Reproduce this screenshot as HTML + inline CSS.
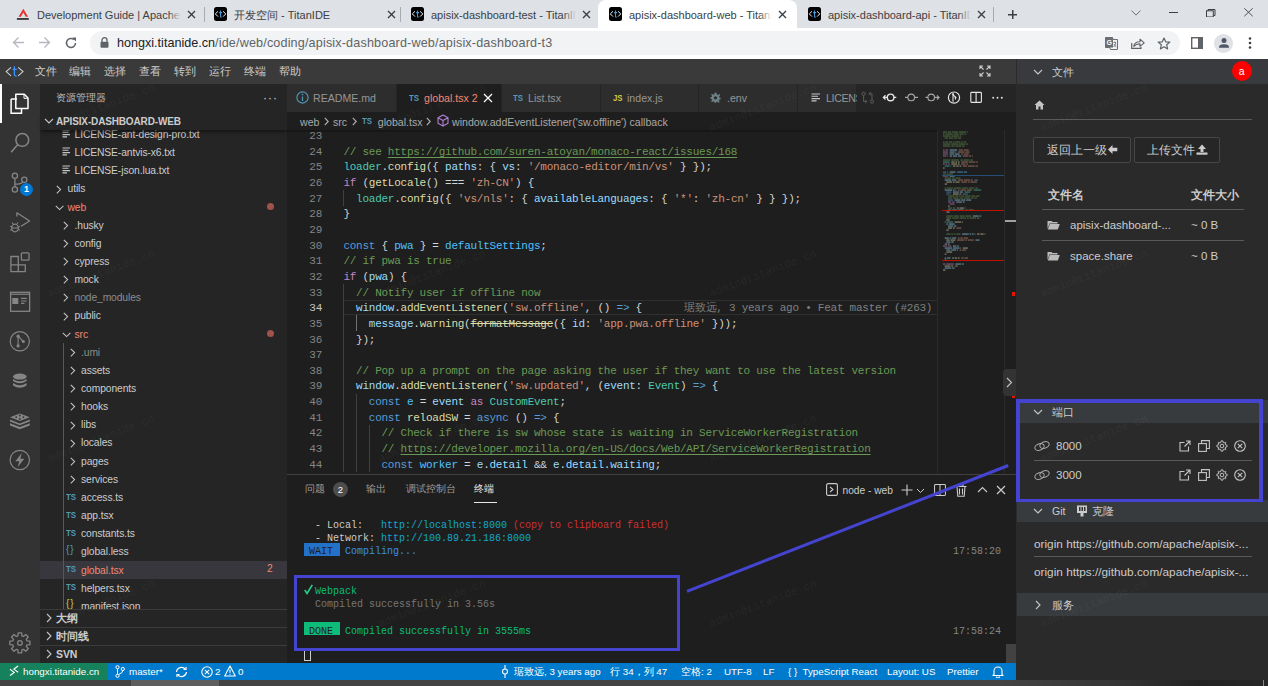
<!DOCTYPE html><html><head><meta charset="utf-8"><style>
*{box-sizing:border-box;margin:0;padding:0}
html,body{width:1268px;height:686px;overflow:hidden;background:#1e1e1e;font-family:"Liberation Sans",sans-serif}
div,span{white-space:nowrap}
.code div,.code span,.tt,.tt span{white-space:pre}
.a{position:absolute}
.tab{position:absolute;top:0;height:28px;font-size:11px;color:#3c4043}
.tab .t{position:absolute;top:8px;overflow:hidden;height:14px;line-height:14px}
.tab .fade{position:absolute;top:6px;width:22px;height:18px;background:linear-gradient(90deg,rgba(222,225,230,0),#dee1e6)}
.tab .x{position:absolute;top:7px}
.sep{position:absolute;top:7px;width:1px;height:15px;background:#a8abb0}
.ticon{position:absolute;top:7px;width:14px;height:14px;background:#000;border-radius:2px}
.menu{position:absolute;top:64px;font-size:11px;color:#cccccc;line-height:14px}
.side{font-size:10.3px;color:#cccccc;line-height:14px;letter-spacing:-0.1px}
.row{position:absolute;left:40px;width:247px;height:18px}
.row .n{position:absolute;top:2px}
.chev{position:absolute;top:5px;width:6px;height:6px;border-right:1.2px solid #c5c5c5;border-bottom:1.2px solid #c5c5c5}
.code{white-space:pre;font-family:"Liberation Mono",monospace;font-size:11px;letter-spacing:-0.25px;color:#d4d4d4}
.ln{position:absolute;left:290px;width:33px;text-align:right;color:#858585}
.cl{position:absolute;left:344px}
.cm{color:#6a9955}.kw{color:#569cd6}.ct{color:#c586c0}.v{color:#9cdcfe}.cv{color:#4fc1ff}.fn{color:#dcdcaa}.s{color:#ce9178}.ty{color:#4ec9b0}
.b1,.b2,.b3{color:#d4d4d4}
.u{text-decoration:underline;text-underline-offset:2px}
.term{font-family:"Liberation Mono",monospace;font-size:10px;color:#cccccc}
.sb{position:absolute;top:665px;font-size:9.8px;color:#fff;line-height:13px}
.rp{font-size:11.5px;color:#cccccc}
</style></head><body>
<div class="a" style="left:0;top:0;width:1268px;height:28px;background:#dee1e6"></div>
<div class="tab" style="left:0px;width:205px;">
<svg class="a" style="left:16px;top:8px" width="14" height="13" viewBox="16 8 14 13"><path d="M23.3 8.7 L28.1 16.8 L25.7 16.8 L23.3 12.5 L20.9 16.8 L18.5 16.8 Z" fill="#e8322f"/><rect x="16.9" y="18.1" width="11.9" height="1.7" fill="#2a2a2a"/></svg>
<div class="t" style="left:37px;width:144px">Development Guide | Apache APISIX</div>
<div class="fade" style="left:168px;width:13px;background:linear-gradient(90deg,rgba(255,255,255,0),#dee1e6)"></div>
<svg class="a" style="left:187px;top:10px" width="9" height="9" viewBox="0 0 9 9"><path d="M1 1 L8 8 M8 1 L1 8" stroke="#3c4043" stroke-width="1.4"/></svg>
</div>
<div class="sep" style="left:204px"></div>
<div class="tab" style="left:205px;width:195px;">
<div class="ticon" style="left:9px;width:13px;height:13.5px;top:7px;border-radius:2.5px"><svg width="13" height="13.5" viewBox="0 0 13 13.5"><path d="M4 4.3 L1.3 6.9 L4 9.6 M9.1 4.3 L11.8 6.9 L9.1 9.6" stroke="#f0f0f0" stroke-width="1" fill="none"/><path d="M6.5 3.6 V9.3 Q6.5 10.2 7.7 10.1 M5.1 5.6 H8.1" stroke="#3f9ee0" stroke-width="1.05" fill="none"/></svg></div>
<div class="t" style="left:29px;width:147px">开发空间 - TitanIDE</div>
<div class="fade" style="left:163px;width:13px;background:linear-gradient(90deg,rgba(255,255,255,0),#dee1e6)"></div>
<svg class="a" style="left:182px;top:10px" width="9" height="9" viewBox="0 0 9 9"><path d="M1 1 L8 8 M8 1 L1 8" stroke="#3c4043" stroke-width="1.4"/></svg>
</div>
<div class="sep" style="left:400px"></div>
<div class="tab" style="left:400px;width:198px;">
<div class="ticon" style="left:11px;width:13px;height:13.5px;top:7px;border-radius:2.5px"><svg width="13" height="13.5" viewBox="0 0 13 13.5"><path d="M4 4.3 L1.3 6.9 L4 9.6 M9.1 4.3 L11.8 6.9 L9.1 9.6" stroke="#f0f0f0" stroke-width="1" fill="none"/><path d="M6.5 3.6 V9.3 Q6.5 10.2 7.7 10.1 M5.1 5.6 H8.1" stroke="#3f9ee0" stroke-width="1.05" fill="none"/></svg></div>
<div class="t" style="left:31px;width:145px">apisix-dashboard-test - TitanIDE</div>
<div class="fade" style="left:163px;width:13px;background:linear-gradient(90deg,rgba(255,255,255,0),#dee1e6)"></div>
<svg class="a" style="left:182px;top:10px" width="9" height="9" viewBox="0 0 9 9"><path d="M1 1 L8 8 M8 1 L1 8" stroke="#3c4043" stroke-width="1.4"/></svg>
</div>
<div class="tab" style="left:598px;width:199px;background:#fff;border-radius:8px 8px 0 0;">
<div class="ticon" style="left:11px;width:13px;height:13.5px;top:7px;border-radius:2.5px"><svg width="13" height="13.5" viewBox="0 0 13 13.5"><path d="M4 4.3 L1.3 6.9 L4 9.6 M9.1 4.3 L11.8 6.9 L9.1 9.6" stroke="#f0f0f0" stroke-width="1" fill="none"/><path d="M6.5 3.6 V9.3 Q6.5 10.2 7.7 10.1 M5.1 5.6 H8.1" stroke="#3f9ee0" stroke-width="1.05" fill="none"/></svg></div>
<div class="t" style="left:31px;width:143px">apisix-dashboard-web - TitanIDE</div>
<div class="fade" style="left:161px;width:13px;background:linear-gradient(90deg,rgba(255,255,255,0),#fff)"></div>
<svg class="a" style="left:180px;top:10px" width="9" height="9" viewBox="0 0 9 9"><path d="M1 1 L8 8 M8 1 L1 8" stroke="#3c4043" stroke-width="1.4"/></svg>
</div>
<div class="tab" style="left:797px;width:198px;">
<div class="ticon" style="left:11px;width:13px;height:13.5px;top:7px;border-radius:2.5px"><svg width="13" height="13.5" viewBox="0 0 13 13.5"><path d="M4 4.3 L1.3 6.9 L4 9.6 M9.1 4.3 L11.8 6.9 L9.1 9.6" stroke="#f0f0f0" stroke-width="1" fill="none"/><path d="M6.5 3.6 V9.3 Q6.5 10.2 7.7 10.1 M5.1 5.6 H8.1" stroke="#3f9ee0" stroke-width="1.05" fill="none"/></svg></div>
<div class="t" style="left:31px;width:143px">apisix-dashboard-api - TitanIDE</div>
<div class="fade" style="left:161px;width:13px;background:linear-gradient(90deg,rgba(255,255,255,0),#dee1e6)"></div>
<svg class="a" style="left:180px;top:10px" width="9" height="9" viewBox="0 0 9 9"><path d="M1 1 L8 8 M8 1 L1 8" stroke="#3c4043" stroke-width="1.4"/></svg>
</div>
<div class="sep" style="left:993px;top:7px;height:15px"></div>
<svg class="a" style="left:1007.5px;top:9.5px" width="9.5" height="9.5" viewBox="0 0 9.5 9.5"><path d="M4.75 0 V9.5 M0 4.75 H9.5" stroke="#3c4043" stroke-width="1.5"/></svg>
<svg class="a" style="left:1131px;top:10px" width="10" height="6" viewBox="0 0 10 6"><path d="M0.5 0.6 L5 5.1 L9.5 0.6" stroke="#5f6368" stroke-width="0.9" fill="none"/></svg>
<div class="a" style="left:1168.7px;top:12px;width:9px;height:1px;background:#3c4043"></div>
<svg class="a" style="left:1206px;top:8.5px" width="9.5" height="8.5" viewBox="0 0 9.5 8.5"><rect x="0.5" y="1.8" width="6.8" height="6.2" stroke="#3c4043" stroke-width="1" fill="none"/><path d="M2 1.8 V0.5 H9 V6.5 H7.3" stroke="#3c4043" stroke-width="1" fill="none"/></svg>
<svg class="a" style="left:1244.4px;top:8.3px" width="9" height="8.5" viewBox="0 0 9 8.5"><path d="M0.3 0.3 L8.7 8.2 M8.7 0.3 L0.3 8.2" stroke="#3c4043" stroke-width="0.9"/></svg>
<div class="a" style="left:0;top:28px;width:1268px;height:31px;background:#fff"></div>
<svg class="a" style="left:12px;top:36px" width="13" height="13" viewBox="0 0 13 13"><path d="M12 6.5 H1.5 M6.5 1.5 L1.5 6.5 L6.5 11.5" stroke="#b4b7bb" stroke-width="1.3" fill="none"/></svg>
<svg class="a" style="left:38px;top:36px" width="13" height="13" viewBox="0 0 13 13"><path d="M1 6.5 H11.5 M6.5 1.5 L11.5 6.5 L6.5 11.5" stroke="#b4b7bb" stroke-width="1.3" fill="none"/></svg>
<svg class="a" style="left:64px;top:36px" width="14" height="14" viewBox="0 0 14 14"><path d="M11.5 7 A4.5 4.5 0 1 1 10.2 3.8" stroke="#5f6368" stroke-width="1.5" fill="none"/><path d="M8.2 1.6 H12 V5.4 Z" fill="#5f6368"/></svg>
<div class="a" style="left:90px;top:31px;width:1090px;height:24px;border-radius:12px;background:#f1f3f4"></div>
<svg class="a" style="left:100px;top:37px" width="9" height="11" viewBox="0 0 9 11"><path d="M2 5 V3.2 A2.5 2.5 0 0 1 7 3.2 V5" stroke="#5f6368" stroke-width="1.3" fill="none"/><rect x="0.5" y="4.8" width="8" height="6" rx="1" fill="#5f6368"/></svg>
<div class="a" style="left:117px;top:36px;font-size:12.6px;line-height:15px;color:#202124">hongxi.titanide.cn<span style="color:#5f6368;letter-spacing:0.16px">/ide/web/coding/apisix-dashboard-web/apisix-dashboard-t3</span></div>
<svg class="a" style="left:1105px;top:37px" width="13" height="13" viewBox="0 0 13 13"><path d="M0.5 0.5 H7.5 L8.2 2.5 H12.5 V12.5 H5.5 L4.8 10.5 H0.5 Z" fill="#f1f3f4" stroke="#6b6e72" stroke-width="1"/><rect x="0.5" y="0.5" width="7.5" height="10" fill="#6b6e72"/><text x="1.6" y="8.2" font-size="7" font-weight="bold" fill="#fff" font-family="Liberation Sans">G</text><path d="M8.5 5.5 H11 M9.8 4.5 V5.5 M9 7 Q10 9.5 11.5 10 M10.8 5.8 Q10.5 8.5 8.6 10" stroke="#6b6e72" stroke-width="0.8" fill="none"/></svg>
<svg class="a" style="left:1131px;top:38px" width="14" height="11" viewBox="0 0 14 11"><path d="M0.7 5 V10.3 H10 V9" stroke="#5f6368" stroke-width="1.2" fill="none"/><path d="M2.8 8.3 Q3.5 3.8 9 3.8 V1.2 L13.2 4.8 L9 8.4 V5.9 Q5 5.9 2.8 8.3 Z" stroke="#5f6368" stroke-width="1.1" fill="none" stroke-linejoin="round"/></svg>
<svg class="a" style="left:1157px;top:37px" width="14" height="13" viewBox="0 0 14 13"><path d="M7 1 L8.7 4.8 L12.8 5.1 L9.7 7.8 L10.6 11.9 L7 9.8 L3.4 11.9 L4.3 7.8 L1.2 5.1 L5.3 4.8 Z" stroke="#5f6368" stroke-width="1.2" fill="none" stroke-linejoin="round"/></svg>
<svg class="a" style="left:1191px;top:37px" width="12" height="12" viewBox="0 0 12 12"><rect x="0.7" y="0.7" width="10.6" height="10.6" stroke="#5f6368" stroke-width="1.4" fill="none"/><rect x="7" y="0.7" width="4.3" height="10.6" fill="#5f6368"/></svg>
<div class="a" style="left:1214.4px;top:33.5px;width:19px;height:19px;border-radius:10px;background:#dfe1e5"></div>
<svg class="a" style="left:1217px;top:36px" width="14" height="14" viewBox="0 0 14 14"><circle cx="7" cy="4.6" r="2.5" fill="#4d5766"/><path d="M2 11.2 Q2 8.3 7 8.3 Q12 8.3 12 11.2 V11.8 H2 Z" fill="#4d5766"/></svg>
<svg class="a" style="left:1248px;top:36px" width="4" height="14" viewBox="0 0 4 14"><circle cx="2" cy="2.5" r="1.3" fill="#3c4043"/><circle cx="2" cy="7" r="1.3" fill="#3c4043"/><circle cx="2" cy="11.5" r="1.3" fill="#3c4043"/></svg>
<div class="a" style="left:0;top:59px;width:1268px;height:25px;background:#3a3a3a"></div>
<svg class="a" style="left:0;top:59px" width="30" height="25" viewBox="0 59 30 25"><path d="M11 67.3 L6.2 71.6 L11 75.9 M18.2 67.3 L23 71.6 L18.2 75.9" stroke="#d0d0d0" stroke-width="1.1" fill="none"/><path d="M14.4 66.3 V74.4 Q14.4 76.2 16.6 76 M12.6 69.4 H16.8" stroke="#3794ff" stroke-width="1.3" fill="none"/></svg>
<div class="menu" style="left:35px">文件</div>
<div class="menu" style="left:69px">编辑</div>
<div class="menu" style="left:104px">选择</div>
<div class="menu" style="left:139px">查看</div>
<div class="menu" style="left:174px">转到</div>
<div class="menu" style="left:209px">运行</div>
<div class="menu" style="left:244px">终端</div>
<div class="menu" style="left:279px">帮助</div>
<svg class="a" style="left:979px;top:65px" width="12" height="12" viewBox="0 0 12 12"><path d="M1 4 V1 H4 M8 1 H11 V4 M11 8 V11 H8 M4 11 H1 V8 M1 1 L4.5 4.5 M11 1 L7.5 4.5 M11 11 L7.5 7.5 M1 11 L4.5 7.5" stroke="#cccccc" stroke-width="1.1" fill="none"/></svg>
<div class="a" style="left:0;top:84px;width:40px;height:579px;background:#333333"></div>
<div class="a" style="left:0;top:84px;width:2px;height:39px;background:#ffffff"></div>
<svg class="a" style="left:0;top:84px" width="40" height="579" viewBox="0 84 40 579"><path d="M11.1 99 H17 M11.1 99 V113.2 H21.5 V108.8" stroke="#ffffff" stroke-width="1.5" fill="none"/><path d="M15.8 94.3 H24.3 L28 98 V108.5 H15.8 Z" stroke="#ffffff" stroke-width="1.5" fill="none" stroke-linejoin="round"/><path d="M24 94.5 V98.3 H27.8" stroke="#ffffff" stroke-width="1" fill="none"/><circle cx="22.3" cy="139.9" r="6.4" stroke="#858585" stroke-width="1.5" fill="none"/><path d="M17.6 144.8 L11.1 152.3" stroke="#858585" stroke-width="1.6"/><circle cx="14.9" cy="175.7" r="2.6" stroke="#858585" stroke-width="1.3" fill="none"/><circle cx="24.3" cy="179.8" r="2.6" stroke="#858585" stroke-width="1.3" fill="none"/><circle cx="14.9" cy="189.5" r="2.6" stroke="#858585" stroke-width="1.3" fill="none"/><path d="M14.9 178.3 V186.9 M23 182.2 Q21 184 15.5 184.2" stroke="#858585" stroke-width="1.3" fill="none"/><path d="M16.9 216.5 V212.8 L29.6 221 L21 226.3" stroke="#858585" stroke-width="1.3" fill="none" stroke-linejoin="round"/><ellipse cx="15" cy="228" rx="3.3" ry="3.8" stroke="#858585" stroke-width="1.3" fill="none"/><path d="M11.7 226.5 H10 M11.7 230 H10 M18.3 226.5 H20 M18.3 230 H20 M13 223.8 L12 222.5 M17 223.8 L18 222.5 M11.7 228 H18.3" stroke="#858585" stroke-width="1.1" fill="none"/><path d="M10.9 256.5 H18.3 V264.9 H25.3 V271.6 H10.9 Z M10.9 264.9 H18.3 V271.6" stroke="#858585" stroke-width="1.3" fill="none" stroke-linejoin="round"/><rect x="21.4" y="252.8" width="7.6" height="7.4" rx="1" stroke="#858585" stroke-width="1.3" fill="none"/><rect x="10.6" y="292.3" width="19" height="19" stroke="#858585" stroke-width="1.3" fill="none"/><path d="M10.6 294.2 H29.6" stroke="#858585" stroke-width="1.2"/><rect x="12.3" y="298" width="6" height="6" fill="#858585"/><path d="M21 298.4 H26.8 M21 301 H26.8 M21 303.4 H24.5" stroke="#858585" stroke-width="1.1"/><circle cx="19.8" cy="341.3" r="9.6" stroke="#858585" stroke-width="1.2" fill="none"/><path d="M18.1 336.2 V345.9 M18.1 336.2 L23.3 341.5" stroke="#858585" stroke-width="1.1"/><circle cx="18.1" cy="336.2" r="1.6" fill="#858585"/><circle cx="23.3" cy="341.5" r="1.6" fill="#858585"/><circle cx="18.1" cy="345.9" r="1.6" fill="#858585"/><ellipse cx="19.8" cy="376.6" rx="6.8" ry="3" fill="#858585"/><path d="M13 379 Q19.8 383.5 26.6 379 V381 Q19.8 385.5 13 381 Z M13 383 Q19.8 387.5 26.6 383 V385.5 Q19.8 390 13 385.5 Z" fill="#858585"/><path d="M19.8 413.5 L29.8 417.2 L19.8 421 L10 417.2 Z" fill="#858585"/><path d="M10 419.6 L19.8 423.4 L29.8 419.6 V421.5 L19.8 425.3 L10 421.5 Z M10 423.2 L19.8 427 L29.8 423.2 V425.5 L19.8 429.3 L10 425.5 Z" fill="#858585"/><circle cx="19.8" cy="415.5" r="0.9" fill="#333"/><circle cx="16.2" cy="417.2" r="0.9" fill="#333"/><circle cx="23.4" cy="417.2" r="0.9" fill="#333"/><circle cx="19.8" cy="419" r="0.9" fill="#333"/><circle cx="19.8" cy="460" r="9.7" stroke="#858585" stroke-width="1.2" fill="none"/><path d="M21.8 453 L15.3 461.2 H19.3 L17.6 467.3 L24.3 458.8 H20.3 Z" fill="#858585"/><path d="M26.91 640.86 L29.95 641.15 L29.95 644.65 L26.91 644.94 L26.30 646.42 L28.25 648.77 L25.77 651.25 L23.42 649.30 L21.94 649.91 L21.65 652.95 L18.15 652.95 L17.86 649.91 L16.38 649.30 L14.03 651.25 L11.55 648.77 L13.50 646.42 L12.89 644.94 L9.85 644.65 L9.85 641.15 L12.89 640.86 L13.50 639.38 L11.55 637.03 L14.03 634.55 L16.38 636.50 L17.86 635.89 L18.15 632.85 L21.65 632.85 L21.94 635.89 L23.42 636.50 L25.77 634.55 L28.25 637.03 L26.30 639.38 Z" stroke="#858585" stroke-width="1.3" fill="none" stroke-linejoin="round"/><circle cx="19.9" cy="642.9" r="2.3" stroke="#858585" stroke-width="1.3" fill="none"/></svg>
<div class="a" style="left:20.2px;top:183.3px;width:12.8px;height:12.8px;border-radius:7px;background:#0078d4;color:#fff;font-size:9px;line-height:13px;text-align:center;font-weight:bold">1</div>
<div class="a" style="left:40px;top:84px;width:247px;height:579px;background:#252526"></div>
<div class="a side" style="left:56px;top:91px;font-size:10px;color:#bbbbbb">资源管理器</div>
<div class="a" style="left:263px;top:91px;font-size:12px;color:#cccccc;letter-spacing:1px">···</div>
<div class="a" style="left:40px;top:130px;width:247px;height:479px;overflow:hidden">
<svg class="a" style="left:21.5px;top:-0.90px" width="9" height="9" viewBox="0 0 9 9"><path d="M0.5 1 H8 M0.5 3.3 H6.5 M0.5 5.6 H8 M0.5 7.9 H5" stroke="#c5c5c5" stroke-width="1.1"/></svg>
<div class="a side" style="left:34.5px;top:-2.10px;color:#cccccc">LICENSE-ant-design-pro.txt</div>
<svg class="a" style="left:21.5px;top:17.25px" width="9" height="9" viewBox="0 0 9 9"><path d="M0.5 1 H8 M0.5 3.3 H6.5 M0.5 5.6 H8 M0.5 7.9 H5" stroke="#c5c5c5" stroke-width="1.1"/></svg>
<div class="a side" style="left:34.5px;top:16.05px;color:#cccccc">LICENSE-antvis-x6.txt</div>
<svg class="a" style="left:21.5px;top:35.40px" width="9" height="9" viewBox="0 0 9 9"><path d="M0.5 1 H8 M0.5 3.3 H6.5 M0.5 5.6 H8 M0.5 7.9 H5" stroke="#c5c5c5" stroke-width="1.1"/></svg>
<div class="a side" style="left:34.5px;top:34.20px;color:#cccccc">LICENSE-json.lua.txt</div>
<svg class="a" style="left:16.0px;top:54.55px" width="6" height="10" viewBox="0 0 6 10"><path d="M0.8 0.8 L4.6 4.6 L0.8 8.4" stroke="#c5c5c5" stroke-width="1.05" fill="none"/></svg>
<div class="a side" style="left:27.5px;top:52.35px;color:#cccccc">utils</div>
<svg class="a" style="left:15.0px;top:74.70px" width="10" height="6" viewBox="0 0 10 6"><path d="M0.8 0.8 L4.6 4.6 L8.4 0.8" stroke="#c5c5c5" stroke-width="1.05" fill="none"/></svg>
<div class="a side" style="left:27.5px;top:70.50px;color:#f48771">web</div>
<div class="a" style="left:227px;top:73.20px;width:7px;height:7px;border-radius:4px;background:#a1524a"></div>
<svg class="a" style="left:23.0px;top:90.85px" width="6" height="10" viewBox="0 0 6 10"><path d="M0.8 0.8 L4.6 4.6 L0.8 8.4" stroke="#c5c5c5" stroke-width="1.05" fill="none"/></svg>
<div class="a side" style="left:34.5px;top:88.65px;color:#cccccc">.husky</div>
<svg class="a" style="left:23.0px;top:109.00px" width="6" height="10" viewBox="0 0 6 10"><path d="M0.8 0.8 L4.6 4.6 L0.8 8.4" stroke="#c5c5c5" stroke-width="1.05" fill="none"/></svg>
<div class="a side" style="left:34.5px;top:106.80px;color:#cccccc">config</div>
<svg class="a" style="left:23.0px;top:127.15px" width="6" height="10" viewBox="0 0 6 10"><path d="M0.8 0.8 L4.6 4.6 L0.8 8.4" stroke="#c5c5c5" stroke-width="1.05" fill="none"/></svg>
<div class="a side" style="left:34.5px;top:124.95px;color:#cccccc">cypress</div>
<svg class="a" style="left:23.0px;top:145.30px" width="6" height="10" viewBox="0 0 6 10"><path d="M0.8 0.8 L4.6 4.6 L0.8 8.4" stroke="#c5c5c5" stroke-width="1.05" fill="none"/></svg>
<div class="a side" style="left:34.5px;top:143.10px;color:#cccccc">mock</div>
<svg class="a" style="left:23.0px;top:163.45px" width="6" height="10" viewBox="0 0 6 10"><path d="M0.8 0.8 L4.6 4.6 L0.8 8.4" stroke="#c5c5c5" stroke-width="1.05" fill="none"/></svg>
<div class="a side" style="left:34.5px;top:161.25px;color:#8c8c8c">node_modules</div>
<svg class="a" style="left:23.0px;top:181.60px" width="6" height="10" viewBox="0 0 6 10"><path d="M0.8 0.8 L4.6 4.6 L0.8 8.4" stroke="#c5c5c5" stroke-width="1.05" fill="none"/></svg>
<div class="a side" style="left:34.5px;top:179.40px;color:#cccccc">public</div>
<svg class="a" style="left:22.0px;top:201.75px" width="10" height="6" viewBox="0 0 10 6"><path d="M0.8 0.8 L4.6 4.6 L8.4 0.8" stroke="#c5c5c5" stroke-width="1.05" fill="none"/></svg>
<div class="a side" style="left:34.5px;top:197.55px;color:#f48771">src</div>
<div class="a" style="left:227px;top:200.25px;width:7px;height:7px;border-radius:4px;background:#a1524a"></div>
<svg class="a" style="left:29.5px;top:217.90px" width="6" height="10" viewBox="0 0 6 10"><path d="M0.8 0.8 L4.6 4.6 L0.8 8.4" stroke="#c5c5c5" stroke-width="1.05" fill="none"/></svg>
<div class="a side" style="left:41.0px;top:215.70px;color:#8c8c8c">.umi</div>
<svg class="a" style="left:29.5px;top:236.05px" width="6" height="10" viewBox="0 0 6 10"><path d="M0.8 0.8 L4.6 4.6 L0.8 8.4" stroke="#c5c5c5" stroke-width="1.05" fill="none"/></svg>
<div class="a side" style="left:41.0px;top:233.85px;color:#cccccc">assets</div>
<svg class="a" style="left:29.5px;top:254.20px" width="6" height="10" viewBox="0 0 6 10"><path d="M0.8 0.8 L4.6 4.6 L0.8 8.4" stroke="#c5c5c5" stroke-width="1.05" fill="none"/></svg>
<div class="a side" style="left:41.0px;top:252.00px;color:#cccccc">components</div>
<svg class="a" style="left:29.5px;top:272.35px" width="6" height="10" viewBox="0 0 6 10"><path d="M0.8 0.8 L4.6 4.6 L0.8 8.4" stroke="#c5c5c5" stroke-width="1.05" fill="none"/></svg>
<div class="a side" style="left:41.0px;top:270.15px;color:#cccccc">hooks</div>
<svg class="a" style="left:29.5px;top:290.50px" width="6" height="10" viewBox="0 0 6 10"><path d="M0.8 0.8 L4.6 4.6 L0.8 8.4" stroke="#c5c5c5" stroke-width="1.05" fill="none"/></svg>
<div class="a side" style="left:41.0px;top:288.30px;color:#cccccc">libs</div>
<svg class="a" style="left:29.5px;top:308.65px" width="6" height="10" viewBox="0 0 6 10"><path d="M0.8 0.8 L4.6 4.6 L0.8 8.4" stroke="#c5c5c5" stroke-width="1.05" fill="none"/></svg>
<div class="a side" style="left:41.0px;top:306.45px;color:#cccccc">locales</div>
<svg class="a" style="left:29.5px;top:326.80px" width="6" height="10" viewBox="0 0 6 10"><path d="M0.8 0.8 L4.6 4.6 L0.8 8.4" stroke="#c5c5c5" stroke-width="1.05" fill="none"/></svg>
<div class="a side" style="left:41.0px;top:324.60px;color:#cccccc">pages</div>
<svg class="a" style="left:29.5px;top:344.95px" width="6" height="10" viewBox="0 0 6 10"><path d="M0.8 0.8 L4.6 4.6 L0.8 8.4" stroke="#c5c5c5" stroke-width="1.05" fill="none"/></svg>
<div class="a side" style="left:41.0px;top:342.75px;color:#cccccc">services</div>
<div class="a" style="left:25.6px;top:361.50px;font-size:9.8px;font-weight:bold;color:#519aba;line-height:10px;transform:scaleX(0.8);transform-origin:0 0;letter-spacing:-0.2px">TS</div>
<div class="a side" style="left:41.0px;top:360.90px;color:#cccccc">access.ts</div>
<div class="a" style="left:25.6px;top:379.65px;font-size:9.8px;font-weight:bold;color:#519aba;line-height:10px;transform:scaleX(0.8);transform-origin:0 0;letter-spacing:-0.2px">TS</div>
<div class="a side" style="left:41.0px;top:379.05px;color:#cccccc">app.tsx</div>
<div class="a" style="left:25.6px;top:397.80px;font-size:9.8px;font-weight:bold;color:#519aba;line-height:10px;transform:scaleX(0.8);transform-origin:0 0;letter-spacing:-0.2px">TS</div>
<div class="a side" style="left:41.0px;top:397.20px;color:#cccccc">constants.ts</div>
<div class="a" style="left:26.0px;top:413.55px;font-size:10px;color:#519aba;line-height:12px;letter-spacing:1px">{}</div>
<div class="a side" style="left:41.0px;top:415.35px;color:#cccccc">global.less</div>
<div class="a" style="left:0;top:430.70px;width:247px;height:18.2px;background:#37373d"></div>
<div class="a" style="left:25.6px;top:434.10px;font-size:9.8px;font-weight:bold;color:#519aba;line-height:10px;transform:scaleX(0.8);transform-origin:0 0;letter-spacing:-0.2px">TS</div>
<div class="a side" style="left:41.0px;top:433.50px;color:#f48771">global.tsx</div>
<div class="a side" style="left:227px;top:432.20px;color:#f48771">2</div>
<div class="a" style="left:25.6px;top:452.25px;font-size:9.8px;font-weight:bold;color:#519aba;line-height:10px;transform:scaleX(0.8);transform-origin:0 0;letter-spacing:-0.2px">TS</div>
<div class="a side" style="left:41.0px;top:451.65px;color:#cccccc">helpers.tsx</div>
<div class="a" style="left:26.0px;top:468.00px;font-size:10px;color:#cbcb41;line-height:12px;letter-spacing:1px">{}</div>
<div class="a side" style="left:41.0px;top:469.80px;color:#cccccc">manifest.json</div>
<div class="a" style="left:22.8px;top:212.8px;width:1px;height:300px;background:#585858"></div>
</div>
<div class="a" style="left:40px;top:112px;width:247px;height:18px;background:#252526;box-shadow:0 3px 3px -1px rgba(0,0,0,0.45)"></div>
<svg class="a" style="left:44px;top:118px" width="10" height="6" viewBox="0 0 10 6"><path d="M1 1 L5 5 L9 1" stroke="#c5c5c5" stroke-width="1.1" fill="none"/></svg>
<div class="a side" style="left:56px;top:115px;font-weight:bold;font-size:10px;letter-spacing:-0.15px;color:#cccccc">APISIX-DASHBOARD-WEB</div>
<div class="a" style="left:40px;top:609px;width:247px;height:18px;border-top:1px solid #3c3c3c;background:#252526"></div>
<svg class="a" style="left:45.5px;top:613px" width="6" height="10" viewBox="0 0 6 10"><path d="M1 1 L5 5 L1 9" stroke="#c5c5c5" stroke-width="1.1" fill="none"/></svg>
<div class="a side" style="left:56px;top:611px;font-weight:bold;font-size:10.5px;color:#cccccc">大纲</div>
<div class="a" style="left:40px;top:627px;width:247px;height:18px;border-top:1px solid #3c3c3c;background:#252526"></div>
<svg class="a" style="left:45.5px;top:631px" width="6" height="10" viewBox="0 0 6 10"><path d="M1 1 L5 5 L1 9" stroke="#c5c5c5" stroke-width="1.1" fill="none"/></svg>
<div class="a side" style="left:56px;top:629px;font-weight:bold;font-size:10.5px;color:#cccccc">时间线</div>
<div class="a" style="left:40px;top:645px;width:247px;height:18px;border-top:1px solid #3c3c3c;background:#252526"></div>
<svg class="a" style="left:45.5px;top:649px" width="6" height="10" viewBox="0 0 6 10"><path d="M1 1 L5 5 L1 9" stroke="#c5c5c5" stroke-width="1.1" fill="none"/></svg>
<div class="a side" style="left:56px;top:647px;font-weight:bold;font-size:10.5px;color:#cccccc">SVN</div>
<div class="a" style="left:287px;top:84px;width:729px;height:28px;background:#252526"></div>
<div class="a" style="left:287px;top:84px;width:110px;height:28px;background:#2d2d2d;border-right:1px solid #252526"></div>
<div class="a" style="left:397px;top:84px;width:105px;height:28px;background:#1e1e1e;border-right:1px solid #252526"></div>
<div class="a" style="left:502px;top:84px;width:99px;height:28px;background:#2d2d2d;border-right:1px solid #252526"></div>
<div class="a" style="left:601px;top:84px;width:98px;height:28px;background:#2d2d2d;border-right:1px solid #252526"></div>
<div class="a" style="left:699px;top:84px;width:99px;height:28px;background:#2d2d2d;border-right:1px solid #252526"></div>
<div class="a" style="left:798px;top:84px;width:72px;height:28px;background:#2d2d2d;border-right:1px solid #252526"></div>
<div class="a" style="left:856px;top:84px;width:160px;height:28px;background:#252526"></div>
<svg class="a" style="left:296px;top:91px" width="13" height="13" viewBox="0 0 13 13"><circle cx="6.5" cy="6.5" r="5.6" stroke="#519aba" stroke-width="1.1" fill="none"/><path d="M6.5 5.5 V10" stroke="#519aba" stroke-width="1.2"/><circle cx="6.5" cy="3.6" r="0.8" fill="#519aba"/></svg>
<div class="a" style="left:313px;top:91px;font-size:10.6px;line-height:14px;color:#969696">README.md</div>
<div class="a" style="left:408.6px;top:92.60px;font-size:9.8px;font-weight:bold;color:#519aba;line-height:10px;transform:scaleX(0.8);transform-origin:0 0;letter-spacing:-0.2px">TS</div>
<div class="a" style="left:424px;top:91px;font-size:10.6px;line-height:14px;color:#969696;color:#f48771">global.tsx 2</div>
<svg class="a" style="left:483px;top:93px" width="10" height="10" viewBox="0 0 10 10"><path d="M1 1 L9 9 M9 1 L1 9" stroke="#ffffff" stroke-width="1.2"/></svg>
<div class="a" style="left:513.0px;top:92.60px;font-size:9.8px;font-weight:bold;color:#519aba;line-height:10px;transform:scaleX(0.8);transform-origin:0 0;letter-spacing:-0.2px">TS</div>
<div class="a" style="left:528px;top:91px;font-size:10.6px;line-height:14px;color:#969696">List.tsx</div>
<div class="a" style="left:612.5px;top:92.60px;font-size:9.8px;font-weight:bold;color:#cbcb41;line-height:10px;transform:scaleX(0.8);transform-origin:0 0;letter-spacing:-0.2px">JS</div>
<div class="a" style="left:627px;top:91px;font-size:10.6px;line-height:14px;color:#969696">index.js</div>
<svg class="a" style="left:710px;top:92px" width="11" height="11" viewBox="0 0 20 20"><path d="M10 1 L12 1.5 L12.5 4.5 L14.5 5.5 L17 3.7 L18.5 5.5 L16.5 8 L17 10 L19.5 10.8 V13 L17 13.5 L16 15.5 L17.5 18 L15.5 19.5 L13 17.5 L11 18.3 L10.5 19.8 H8.5 L8 17.8 L6 17 L3.5 18.8 L2 17 L3.8 14.6 L3 12.5 L0.5 12 V9.8 L3 9.3 L3.8 7.3 L2 4.8 L3.7 3.2 L6 5 L8 4.2 L8.5 1.5 Z" fill="#6d8086"/><circle cx="10" cy="10.5" r="3" fill="#2d2d2d"/></svg>
<div class="a" style="left:727px;top:91px;font-size:10.6px;line-height:14px;color:#969696">.env</div>
<svg class="a" style="left:811px;top:93px" width="10" height="9" viewBox="0 0 10 9"><path d="M0.5 1 H9 M0.5 3.3 H7 M0.5 5.6 H9 M0.5 7.9 H5.5" stroke="#c5c5c5" stroke-width="1.1"/></svg>
<div class="a" style="left:826px;top:91px;width:31px;overflow:hidden;font-size:10.6px;line-height:14px;color:#969696;letter-spacing:-0.35px">LICENSE</div>
<svg class="a" style="left:856px;top:84px" width="160" height="28" viewBox="856 84 160 28"><circle cx="863.6" cy="93.8" r="1.6" stroke="#5c5c5c" stroke-width="1" fill="none"/><circle cx="872" cy="101.6" r="1.6" stroke="#5c5c5c" stroke-width="1" fill="none"/><path d="M863.6 95.4 V101.5 H866.5 M865.3 99.8 L867 101.5 L865.3 103.2 M872 100 V93.8 H869 M870.7 92.1 L869 93.8 L870.7 95.5" stroke="#5c5c5c" stroke-width="1" fill="none"/><circle cx="890.6" cy="97.4" r="3.3" stroke="#e6e6e6" stroke-width="1.4" fill="none"/><path d="M887.3 97.4 H883.5 M885.5 95.3 L883.4 97.4 L885.5 99.5 M893.9 97.4 H896.3" stroke="#e6e6e6" stroke-width="1.3" fill="none"/><circle cx="911.2" cy="97.4" r="3.3" stroke="#a8a8a8" stroke-width="1.1" fill="none"/><path d="M907.9 97.4 H905 M914.5 97.4 H918" stroke="#a8a8a8" stroke-width="1.1" fill="none"/><circle cx="931.2" cy="97.4" r="3.3" stroke="#a8a8a8" stroke-width="1.1" fill="none"/><path d="M927.9 97.4 H925.5 M934.5 97.4 H939 M937 95.3 L939.1 97.4 L937 99.5" stroke="#a8a8a8" stroke-width="1.1" fill="none"/><circle cx="954" cy="97.6" r="5.6" stroke="#e6e6e6" stroke-width="1.2" fill="none"/><path d="M953 93.5 V101.8 M953 94.5 L955.5 97.2 V99.5" stroke="#e6e6e6" stroke-width="1.1" fill="none"/><circle cx="953" cy="94.2" r="0.9" fill="#e6e6e6"/><circle cx="955.5" cy="97.5" r="0.9" fill="#e6e6e6"/><rect x="970.8" y="92.4" width="10.6" height="10" rx="0.8" stroke="#e6e6e6" stroke-width="1.1" fill="none"/><path d="M976.1 92.4 V102.4" stroke="#e6e6e6" stroke-width="1.1"/><circle cx="993.2" cy="97.7" r="0.95" fill="#e6e6e6"/><circle cx="997.5" cy="97.7" r="0.95" fill="#e6e6e6"/><circle cx="1001.8" cy="97.7" r="0.95" fill="#e6e6e6"/></svg>
<div class="a" style="left:287px;top:112px;width:729px;height:18px;background:#1e1e1e"></div>
<div class="a" style="left:300px;top:114.7px;font-size:10.6px;line-height:14px;color:#a9a9a9">web</div>
<svg class="a" style="left:324px;top:116.5px" width="5" height="9" viewBox="0 0 5 9"><path d="M0.8 0.8 L4.2 4.5 L0.8 8.2" stroke="#b0b0b0" stroke-width="1.15" fill="none"/></svg>
<div class="a" style="left:333px;top:114.7px;font-size:10.6px;line-height:14px;color:#a9a9a9">src</div>
<svg class="a" style="left:352px;top:116.5px" width="5" height="9" viewBox="0 0 5 9"><path d="M0.8 0.8 L4.2 4.5 L0.8 8.2" stroke="#b0b0b0" stroke-width="1.15" fill="none"/></svg>
<div class="a" style="left:362.0px;top:115.60px;font-size:9.8px;font-weight:bold;color:#519aba;line-height:10px;transform:scaleX(0.8);transform-origin:0 0;letter-spacing:-0.2px">TS</div>
<div class="a" style="left:377.8px;top:114.7px;font-size:10.6px;line-height:14px;color:#a9a9a9">global.tsx</div>
<svg class="a" style="left:426px;top:116.5px" width="5" height="9" viewBox="0 0 5 9"><path d="M0.8 0.8 L4.2 4.5 L0.8 8.2" stroke="#b0b0b0" stroke-width="1.15" fill="none"/></svg>
<svg class="a" style="left:437px;top:114px" width="12" height="13" viewBox="0 0 12 13"><path d="M6 1 L11 3.8 V9.2 L6 12 L1 9.2 V3.8 Z M1 3.8 L6 6.6 L11 3.8 M6 6.6 V12" stroke="#b180d7" stroke-width="1.1" fill="none" stroke-linejoin="round"/></svg>
<div class="a" style="left:452px;top:114.7px;font-size:10.6px;line-height:14px;color:#a9a9a9">window.addEventListener('sw.offline') callback</div>
<div class="a" style="left:287px;top:130px;width:650px;height:3px;background:linear-gradient(rgba(0,0,0,0.35),rgba(0,0,0,0))"></div>
<div class="a code" style="left:287px;top:130px;width:650px;height:344px;overflow:hidden">
<div class="a" style="left:56px;top:170.44px;width:594px;height:15px;border-top:1px solid #2f2f2f;border-bottom:1px solid #2f2f2f"></div>
<div class="a" style="left:0;top:-0.80px;width:35px;text-align:right;line-height:15.64px;color:#858585">23</div>
<div class="a" style="left:56.4px;top:-0.80px;line-height:15.64px"></div>
<div class="a" style="left:0;top:14.84px;width:35px;text-align:right;line-height:15.64px;color:#858585">24</div>
<div class="a" style="left:56.4px;top:14.84px;line-height:15.64px"><span class="cm">// see </span><span class="cm u">https://github.com/suren-atoyan/monaco-react/issues/168</span></div>
<div class="a" style="left:0;top:30.48px;width:35px;text-align:right;line-height:15.64px;color:#858585">25</div>
<div class="a" style="left:56.4px;top:30.48px;line-height:15.64px"><span class="ty">loader</span>.<span class="fn">config</span><span class="b1">(</span><span class="b2">{</span> <span class="v">paths</span>: <span class="b3">{</span> <span class="v">vs</span>: <span class="s">&#x27;/monaco-editor/min/vs&#x27;</span> <span class="b3">}</span> <span class="b2">}</span><span class="b1">)</span>;</div>
<div class="a" style="left:0;top:46.12px;width:35px;text-align:right;line-height:15.64px;color:#858585">26</div>
<div class="a" style="left:56.4px;top:46.12px;line-height:15.64px"><span class="ct">if</span> <span class="b1">(</span><span class="fn">getLocale</span><span class="b2">()</span> === <span class="s">&#x27;zh-CN&#x27;</span><span class="b1">)</span> <span class="b1">{</span></div>
<div class="a" style="left:0;top:61.76px;width:35px;text-align:right;line-height:15.64px;color:#858585">27</div>
<div class="a" style="left:56.4px;top:61.76px;line-height:15.64px">  <span class="ty">loader</span>.<span class="fn">config</span><span class="b2">(</span><span class="b3">{</span> <span class="s">&#x27;vs/nls&#x27;</span>: <span class="b1">{</span> <span class="v">availableLanguages</span>: <span class="b2">{</span> <span class="s">&#x27;*&#x27;</span>: <span class="s">&#x27;zh-cn&#x27;</span> <span class="b2">}</span> <span class="b1">}</span> <span class="b3">}</span><span class="b2">)</span>;</div>
<div class="a" style="left:0;top:77.40px;width:35px;text-align:right;line-height:15.64px;color:#858585">28</div>
<div class="a" style="left:56.4px;top:77.40px;line-height:15.64px"><span class="b1">}</span></div>
<div class="a" style="left:0;top:93.04px;width:35px;text-align:right;line-height:15.64px;color:#858585">29</div>
<div class="a" style="left:56.4px;top:93.04px;line-height:15.64px"></div>
<div class="a" style="left:0;top:108.68px;width:35px;text-align:right;line-height:15.64px;color:#858585">30</div>
<div class="a" style="left:56.4px;top:108.68px;line-height:15.64px"><span class="kw">const</span> <span class="b1">{</span> <span class="cv">pwa</span> <span class="b1">}</span> = <span class="cv">defaultSettings</span>;</div>
<div class="a" style="left:0;top:124.32px;width:35px;text-align:right;line-height:15.64px;color:#858585">31</div>
<div class="a" style="left:56.4px;top:124.32px;line-height:15.64px"><span class="cm">// if pwa is true</span></div>
<div class="a" style="left:0;top:139.96px;width:35px;text-align:right;line-height:15.64px;color:#858585">32</div>
<div class="a" style="left:56.4px;top:139.96px;line-height:15.64px"><span class="ct">if</span> <span class="b1">(</span><span class="v">pwa</span><span class="b1">)</span> <span class="b1">{</span></div>
<div class="a" style="left:0;top:155.60px;width:35px;text-align:right;line-height:15.64px;color:#858585">33</div>
<div class="a" style="left:56.4px;top:155.60px;line-height:15.64px">  <span class="cm">// Notify user if offline now</span></div>
<div class="a" style="left:0;top:171.24px;width:35px;text-align:right;line-height:15.64px;color:#c6c6c6">34</div>
<div class="a" style="left:56.4px;top:171.24px;line-height:15.64px">  <span class="v">window</span>.<span class="fn">addEventListener</span><span class="b2">(</span><span class="s">&#x27;sw.offline&#x27;</span>, <span class="b3">()</span> <span class="kw">=&gt;</span> <span class="b3">{</span></div>
<div class="a" style="left:0;top:186.88px;width:35px;text-align:right;line-height:15.64px;color:#858585">35</div>
<div class="a" style="left:56.4px;top:186.88px;line-height:15.64px">    <span class="v">message</span>.<span class="fn">warning</span><span class="b1">(</span><span class="fn s2">formatMessage</span><span class="b2">(</span><span class="b3">{</span> <span class="v">id</span>: <span class="s">&#x27;app.pwa.offline&#x27;</span> <span class="b3">}</span><span class="b2">)</span><span class="b1">)</span>;</div>
<div class="a" style="left:0;top:202.52px;width:35px;text-align:right;line-height:15.64px;color:#858585">36</div>
<div class="a" style="left:56.4px;top:202.52px;line-height:15.64px">  <span class="b3">}</span><span class="b2">)</span>;</div>
<div class="a" style="left:0;top:218.16px;width:35px;text-align:right;line-height:15.64px;color:#858585">37</div>
<div class="a" style="left:56.4px;top:218.16px;line-height:15.64px"></div>
<div class="a" style="left:0;top:233.80px;width:35px;text-align:right;line-height:15.64px;color:#858585">38</div>
<div class="a" style="left:56.4px;top:233.80px;line-height:15.64px">  <span class="cm">// Pop up a prompt on the page asking the user if they want to use the latest version</span></div>
<div class="a" style="left:0;top:249.44px;width:35px;text-align:right;line-height:15.64px;color:#858585">39</div>
<div class="a" style="left:56.4px;top:249.44px;line-height:15.64px">  <span class="v">window</span>.<span class="fn">addEventListener</span><span class="b2">(</span><span class="s">&#x27;sw.updated&#x27;</span>, <span class="b3">(</span><span class="v">event</span>: <span class="ty">Event</span><span class="b3">)</span> <span class="kw">=&gt;</span> <span class="b3">{</span></div>
<div class="a" style="left:0;top:265.08px;width:35px;text-align:right;line-height:15.64px;color:#858585">40</div>
<div class="a" style="left:56.4px;top:265.08px;line-height:15.64px">    <span class="kw">const</span> <span class="cv">e</span> = <span class="v">event</span> <span class="ct">as</span> <span class="ty">CustomEvent</span>;</div>
<div class="a" style="left:0;top:280.72px;width:35px;text-align:right;line-height:15.64px;color:#858585">41</div>
<div class="a" style="left:56.4px;top:280.72px;line-height:15.64px">    <span class="kw">const</span> <span class="fn">reloadSW</span> = <span class="kw">async</span> <span class="b1">()</span> <span class="kw">=&gt;</span> <span class="b1">{</span></div>
<div class="a" style="left:0;top:296.36px;width:35px;text-align:right;line-height:15.64px;color:#858585">42</div>
<div class="a" style="left:56.4px;top:296.36px;line-height:15.64px">      <span class="cm">// Check if there is sw whose state is waiting in ServiceWorkerRegistration</span></div>
<div class="a" style="left:0;top:312.00px;width:35px;text-align:right;line-height:15.64px;color:#858585">43</div>
<div class="a" style="left:56.4px;top:312.00px;line-height:15.64px">      <span class="cm">// </span><span class="cm u">https://developer.mozilla.org/en-US/docs/Web/API/ServiceWorkerRegistration</span></div>
<div class="a" style="left:0;top:327.64px;width:35px;text-align:right;line-height:15.64px;color:#858585">44</div>
<div class="a" style="left:56.4px;top:327.64px;line-height:15.64px">      <span class="kw">const</span> <span class="cv">worker</span> = <span class="v">e</span>.<span class="v">detail</span> &amp;&amp; <span class="v">e</span>.<span class="v">detail</span>.<span class="v">waiting</span>;</div>
<div class="a" style="left:56px;top:60.2px;width:1px;height:15.6px;background:#404040"></div>
<div class="a" style="left:56px;top:154.0px;width:1px;height:187.6px;background:#404040"></div>
<div class="a" style="left:69px;top:185.3px;width:1px;height:15.6px;background:#707070"></div>
<div class="a" style="left:69px;top:263.5px;width:1px;height:78.2px;background:#404040"></div>
<div class="a" style="left:82px;top:294.8px;width:1px;height:46.9px;background:#404040"></div>
<div class="a" style="left:397px;top:171.24px;line-height:15.64px;color:#808080">琚致远, 3 years ago • Feat master (#263)</div>
</div>
<style>.s2{text-decoration:line-through}</style>
<div class="a" style="left:937px;top:130px;width:1px;height:344px;background:#2a2a2a"></div>
<svg class="a" style="left:943px;top:131px" width="62" height="150" viewBox="0 0 62 150" opacity="0.6"><rect x="0.00" y="0.50" width="4.15" height="1.1" fill="#6a9955"/><rect x="4.98" y="0.50" width="3.32" height="1.1" fill="#6a9955"/><rect x="9.13" y="0.50" width="5.81" height="1.1" fill="#6a9955"/><rect x="15.77" y="0.50" width="7.47" height="1.1" fill="#6a9955"/><rect x="24.07" y="0.50" width="0.83" height="1.1" fill="#6a9955"/><rect x="0.00" y="2.50" width="1.66" height="1.1" fill="#6a9955"/><rect x="2.49" y="2.50" width="7.47" height="1.1" fill="#6a9955"/><rect x="10.79" y="2.50" width="4.98" height="1.1" fill="#6a9955"/><rect x="16.60" y="2.50" width="4.15" height="1.1" fill="#6a9955"/><rect x="21.58" y="2.50" width="1.66" height="1.1" fill="#6a9955"/><rect x="0.00" y="4.50" width="7.47" height="1.1" fill="#6a9955"/><rect x="8.30" y="4.50" width="7.47" height="1.1" fill="#6a9955"/><rect x="16.60" y="4.50" width="1.66" height="1.1" fill="#6a9955"/><rect x="1.66" y="6.50" width="3.32" height="1.1" fill="#6a9955"/><rect x="5.81" y="6.50" width="4.15" height="1.1" fill="#6a9955"/><rect x="10.79" y="6.50" width="3.32" height="1.1" fill="#6a9955"/><rect x="14.94" y="6.50" width="3.32" height="1.1" fill="#6a9955"/><rect x="0.00" y="10.50" width="1.66" height="1.1" fill="#6a9955"/><rect x="2.49" y="10.50" width="2.49" height="1.1" fill="#6a9955"/><rect x="5.81" y="10.50" width="3.32" height="1.1" fill="#6a9955"/><rect x="9.96" y="10.50" width="1.66" height="1.1" fill="#6a9955"/><rect x="12.45" y="10.50" width="4.98" height="1.1" fill="#6a9955"/><rect x="18.26" y="10.50" width="1.66" height="1.1" fill="#6a9955"/><rect x="20.75" y="10.50" width="2.49" height="1.1" fill="#6a9955"/><rect x="0.00" y="12.50" width="7.47" height="1.1" fill="#6a9955"/><rect x="8.30" y="12.50" width="6.64" height="1.1" fill="#6a9955"/><rect x="15.77" y="12.50" width="6.64" height="1.1" fill="#6a9955"/><rect x="23.24" y="12.50" width="1.66" height="1.1" fill="#6a9955"/><rect x="0.00" y="14.50" width="7.47" height="1.1" fill="#6a9955"/><rect x="8.30" y="14.50" width="3.32" height="1.1" fill="#6a9955"/><rect x="12.45" y="14.50" width="5.81" height="1.1" fill="#6a9955"/><rect x="19.09" y="14.50" width="2.49" height="1.1" fill="#6a9955"/><rect x="0.00" y="18.50" width="1.66" height="1.1" fill="#c586c0"/><rect x="2.49" y="18.50" width="2.49" height="1.1" fill="#c586c0"/><rect x="6.64" y="18.50" width="7.47" height="1.1" fill="#9cdcfe"/><rect x="15.77" y="18.50" width="4.15" height="1.1" fill="#ce9178"/><rect x="20.75" y="18.50" width="4.98" height="1.1" fill="#ce9178"/><rect x="0.00" y="20.50" width="4.98" height="1.1" fill="#c586c0"/><rect x="6.64" y="20.50" width="4.98" height="1.1" fill="#9cdcfe"/><rect x="12.45" y="20.50" width="0.83" height="1.1" fill="#9cdcfe"/><rect x="14.94" y="20.50" width="6.64" height="1.1" fill="#ce9178"/><rect x="22.41" y="20.50" width="4.15" height="1.1" fill="#ce9178"/><rect x="0.00" y="22.50" width="4.98" height="1.1" fill="#c586c0"/><rect x="6.64" y="22.50" width="4.15" height="1.1" fill="#9cdcfe"/><rect x="11.62" y="22.50" width="4.98" height="1.1" fill="#9cdcfe"/><rect x="18.26" y="22.50" width="1.66" height="1.1" fill="#ce9178"/><rect x="20.75" y="22.50" width="4.98" height="1.1" fill="#ce9178"/><rect x="0.00" y="24.50" width="3.32" height="1.1" fill="#c586c0"/><rect x="4.15" y="24.50" width="0.83" height="1.1" fill="#c586c0"/><rect x="6.64" y="24.50" width="2.49" height="1.1" fill="#9cdcfe"/><rect x="9.96" y="24.50" width="4.15" height="1.1" fill="#9cdcfe"/><rect x="14.94" y="24.50" width="3.32" height="1.1" fill="#9cdcfe"/><rect x="19.92" y="24.50" width="4.98" height="1.1" fill="#ce9178"/><rect x="25.73" y="24.50" width="2.49" height="1.1" fill="#ce9178"/><rect x="29.05" y="24.50" width="0.83" height="1.1" fill="#ce9178"/><rect x="0.00" y="28.50" width="7.47" height="1.1" fill="#6a9955"/><rect x="8.30" y="28.50" width="7.47" height="1.1" fill="#6a9955"/><rect x="17.43" y="28.50" width="2.49" height="1.1" fill="#6a9955"/><rect x="20.75" y="28.50" width="5.81" height="1.1" fill="#6a9955"/><rect x="27.39" y="28.50" width="2.49" height="1.1" fill="#6a9955"/><rect x="0.00" y="30.50" width="6.64" height="1.1" fill="#4ec9b0"/><rect x="8.30" y="30.50" width="3.32" height="1.1" fill="#dcdcaa"/><rect x="12.45" y="30.50" width="1.66" height="1.1" fill="#dcdcaa"/><rect x="14.94" y="30.50" width="1.66" height="1.1" fill="#dcdcaa"/><rect x="18.26" y="30.50" width="6.64" height="1.1" fill="#ce9178"/><rect x="25.73" y="30.50" width="6.64" height="1.1" fill="#ce9178"/><rect x="33.20" y="30.50" width="1.66" height="1.1" fill="#ce9178"/><rect x="0.00" y="32.50" width="1.66" height="1.1" fill="#c586c0"/><rect x="2.49" y="32.50" width="1.66" height="1.1" fill="#c586c0"/><rect x="4.98" y="32.50" width="1.66" height="1.1" fill="#c586c0"/><rect x="8.30" y="32.50" width="5.81" height="1.1" fill="#dcdcaa"/><rect x="14.94" y="32.50" width="1.66" height="1.1" fill="#dcdcaa"/><rect x="18.26" y="32.50" width="4.15" height="1.1" fill="#ce9178"/><rect x="23.24" y="32.50" width="1.66" height="1.1" fill="#ce9178"/><rect x="1.66" y="34.50" width="4.98" height="1.1" fill="#4ec9b0"/><rect x="7.47" y="34.50" width="0.83" height="1.1" fill="#4ec9b0"/><rect x="9.96" y="34.50" width="2.49" height="1.1" fill="#dcdcaa"/><rect x="13.28" y="34.50" width="2.49" height="1.1" fill="#dcdcaa"/><rect x="16.60" y="34.50" width="1.66" height="1.1" fill="#dcdcaa"/><rect x="19.92" y="34.50" width="4.15" height="1.1" fill="#ce9178"/><rect x="24.90" y="34.50" width="6.64" height="1.1" fill="#ce9178"/><rect x="32.37" y="34.50" width="2.49" height="1.1" fill="#ce9178"/><rect x="0.00" y="36.50" width="1.66" height="1.1" fill="#d4d4d4"/><rect x="0.00" y="40.50" width="3.32" height="1.1" fill="#569cd6"/><rect x="4.15" y="40.50" width="0.83" height="1.1" fill="#569cd6"/><rect x="6.64" y="40.50" width="5.81" height="1.1" fill="#9cdcfe"/><rect x="14.11" y="40.50" width="5.81" height="1.1" fill="#4fc1ff"/><rect x="20.75" y="40.50" width="3.32" height="1.1" fill="#4fc1ff"/><rect x="0.00" y="42.50" width="3.32" height="1.1" fill="#6a9955"/><rect x="4.15" y="42.50" width="5.81" height="1.1" fill="#6a9955"/><rect x="0.00" y="44.50" width="4.98" height="1.1" fill="#c586c0"/><rect x="6.64" y="44.50" width="4.98" height="1.1" fill="#9cdcfe"/><rect x="1.66" y="46.50" width="6.64" height="1.1" fill="#6a9955"/><rect x="9.13" y="46.50" width="2.49" height="1.1" fill="#6a9955"/><rect x="12.45" y="46.50" width="4.98" height="1.1" fill="#6a9955"/><rect x="1.66" y="48.50" width="6.64" height="1.1" fill="#9cdcfe"/><rect x="9.13" y="48.50" width="4.15" height="1.1" fill="#9cdcfe"/><rect x="14.94" y="48.50" width="4.98" height="1.1" fill="#ce9178"/><rect x="20.75" y="48.50" width="6.64" height="1.1" fill="#ce9178"/><rect x="28.22" y="48.50" width="1.66" height="1.1" fill="#ce9178"/><rect x="31.54" y="48.50" width="3.32" height="1.1" fill="#569cd6"/><rect x="3.32" y="50.50" width="5.81" height="1.1" fill="#dcdcaa"/><rect x="9.96" y="50.50" width="1.66" height="1.1" fill="#dcdcaa"/><rect x="12.45" y="50.50" width="4.15" height="1.1" fill="#dcdcaa"/><rect x="18.26" y="50.50" width="5.81" height="1.1" fill="#ce9178"/><rect x="24.90" y="50.50" width="1.66" height="1.1" fill="#ce9178"/><rect x="27.39" y="50.50" width="6.64" height="1.1" fill="#ce9178"/><rect x="1.66" y="52.50" width="2.49" height="1.1" fill="#d4d4d4"/><rect x="1.66" y="56.50" width="1.66" height="1.1" fill="#6a9955"/><rect x="4.15" y="56.50" width="5.81" height="1.1" fill="#6a9955"/><rect x="10.79" y="56.50" width="7.47" height="1.1" fill="#6a9955"/><rect x="19.09" y="56.50" width="5.81" height="1.1" fill="#6a9955"/><rect x="25.73" y="56.50" width="5.81" height="1.1" fill="#6a9955"/><rect x="32.37" y="56.50" width="2.49" height="1.1" fill="#6a9955"/><rect x="1.66" y="58.50" width="7.47" height="1.1" fill="#9cdcfe"/><rect x="9.96" y="58.50" width="1.66" height="1.1" fill="#9cdcfe"/><rect x="12.45" y="58.50" width="0.83" height="1.1" fill="#9cdcfe"/><rect x="14.94" y="58.50" width="1.66" height="1.1" fill="#ce9178"/><rect x="17.43" y="58.50" width="5.81" height="1.1" fill="#ce9178"/><rect x="24.07" y="58.50" width="4.98" height="1.1" fill="#ce9178"/><rect x="30.71" y="58.50" width="7.47" height="1.1" fill="#4ec9b0"/><rect x="3.32" y="60.50" width="4.98" height="1.1" fill="#569cd6"/><rect x="9.96" y="60.50" width="5.81" height="1.1" fill="#9cdcfe"/><rect x="16.60" y="60.50" width="3.32" height="1.1" fill="#9cdcfe"/><rect x="21.58" y="60.50" width="5.81" height="1.1" fill="#4ec9b0"/><rect x="3.32" y="62.50" width="3.32" height="1.1" fill="#569cd6"/><rect x="7.47" y="62.50" width="0.83" height="1.1" fill="#569cd6"/><rect x="9.96" y="62.50" width="5.81" height="1.1" fill="#dcdcaa"/><rect x="16.60" y="62.50" width="1.66" height="1.1" fill="#dcdcaa"/><rect x="19.92" y="62.50" width="4.98" height="1.1" fill="#569cd6"/><rect x="4.98" y="64.50" width="6.64" height="1.1" fill="#6a9955"/><rect x="12.45" y="64.50" width="2.49" height="1.1" fill="#6a9955"/><rect x="15.77" y="64.50" width="1.66" height="1.1" fill="#6a9955"/><rect x="18.26" y="64.50" width="3.32" height="1.1" fill="#6a9955"/><rect x="22.41" y="64.50" width="4.98" height="1.1" fill="#6a9955"/><rect x="28.22" y="64.50" width="4.15" height="1.1" fill="#6a9955"/><rect x="33.20" y="64.50" width="3.32" height="1.1" fill="#6a9955"/><rect x="4.98" y="66.50" width="4.15" height="1.1" fill="#6a9955"/><rect x="9.96" y="66.50" width="5.81" height="1.1" fill="#6a9955"/><rect x="16.60" y="66.50" width="3.32" height="1.1" fill="#6a9955"/><rect x="20.75" y="66.50" width="6.64" height="1.1" fill="#6a9955"/><rect x="28.22" y="66.50" width="2.49" height="1.1" fill="#6a9955"/><rect x="31.54" y="66.50" width="2.49" height="1.1" fill="#6a9955"/><rect x="4.98" y="68.50" width="4.98" height="1.1" fill="#569cd6"/><rect x="11.62" y="68.50" width="5.81" height="1.1" fill="#9cdcfe"/><rect x="18.26" y="68.50" width="4.15" height="1.1" fill="#9cdcfe"/><rect x="23.24" y="68.50" width="4.98" height="1.1" fill="#9cdcfe"/><rect x="4.98" y="70.50" width="3.32" height="1.1" fill="#c586c0"/><rect x="9.13" y="70.50" width="2.49" height="1.1" fill="#c586c0"/><rect x="13.28" y="70.50" width="5.81" height="1.1" fill="#9cdcfe"/><rect x="19.92" y="70.50" width="1.66" height="1.1" fill="#9cdcfe"/><rect x="6.64" y="72.50" width="4.98" height="1.1" fill="#c586c0"/><rect x="4.98" y="74.50" width="1.66" height="1.1" fill="#d4d4d4"/><rect x="4.98" y="76.50" width="4.15" height="1.1" fill="#6a9955"/><rect x="9.96" y="76.50" width="2.49" height="1.1" fill="#6a9955"/><rect x="14.11" y="76.50" width="1.66" height="1.1" fill="#dcdcaa"/><rect x="16.60" y="76.50" width="4.15" height="1.1" fill="#dcdcaa"/><rect x="21.58" y="76.50" width="0.83" height="1.1" fill="#dcdcaa"/><rect x="4.98" y="78.50" width="3.32" height="1.1" fill="#9cdcfe"/><rect x="9.13" y="78.50" width="4.98" height="1.1" fill="#9cdcfe"/><rect x="14.94" y="78.50" width="5.81" height="1.1" fill="#9cdcfe"/><rect x="22.41" y="78.50" width="2.49" height="1.1" fill="#ce9178"/><rect x="25.73" y="78.50" width="4.98" height="1.1" fill="#ce9178"/><rect x="3.32" y="80.50" width="3.32" height="1.1" fill="#d4d4d4"/><rect x="3.32" y="84.50" width="6.64" height="1.1" fill="#6a9955"/><rect x="10.79" y="84.50" width="4.98" height="1.1" fill="#6a9955"/><rect x="16.60" y="84.50" width="4.98" height="1.1" fill="#6a9955"/><rect x="22.41" y="84.50" width="5.81" height="1.1" fill="#6a9955"/><rect x="29.88" y="84.50" width="5.81" height="1.1" fill="#9cdcfe"/><rect x="36.52" y="84.50" width="1.66" height="1.1" fill="#9cdcfe"/><rect x="3.32" y="86.50" width="4.98" height="1.1" fill="#6a9955"/><rect x="9.13" y="86.50" width="6.64" height="1.1" fill="#6a9955"/><rect x="16.60" y="86.50" width="6.64" height="1.1" fill="#6a9955"/><rect x="24.07" y="86.50" width="1.66" height="1.1" fill="#6a9955"/><rect x="26.56" y="86.50" width="6.64" height="1.1" fill="#6a9955"/><rect x="34.03" y="86.50" width="2.49" height="1.1" fill="#6a9955"/><rect x="3.32" y="88.50" width="3.32" height="1.1" fill="#d4d4d4"/><rect x="1.66" y="90.50" width="1.66" height="1.1" fill="#4ec9b0"/><rect x="4.15" y="90.50" width="5.81" height="1.1" fill="#4ec9b0"/><rect x="11.62" y="90.50" width="6.64" height="1.1" fill="#dcdcaa"/><rect x="19.09" y="90.50" width="0.83" height="1.1" fill="#dcdcaa"/><rect x="3.32" y="92.50" width="1.66" height="1.1" fill="#9cdcfe"/><rect x="5.81" y="92.50" width="5.81" height="1.1" fill="#9cdcfe"/><rect x="4.98" y="94.50" width="4.98" height="1.1" fill="#9cdcfe"/><rect x="10.79" y="94.50" width="2.49" height="1.1" fill="#9cdcfe"/><rect x="4.98" y="96.50" width="4.15" height="1.1" fill="#dcdcaa"/><rect x="9.96" y="96.50" width="1.66" height="1.1" fill="#dcdcaa"/><rect x="13.28" y="96.50" width="4.98" height="1.1" fill="#ce9178"/><rect x="3.32" y="98.50" width="2.49" height="1.1" fill="#d4d4d4"/><rect x="3.32" y="102.50" width="4.15" height="1.1" fill="#6a9955"/><rect x="8.30" y="102.50" width="1.66" height="1.1" fill="#6a9955"/><rect x="10.79" y="102.50" width="1.66" height="1.1" fill="#6a9955"/><rect x="13.28" y="102.50" width="4.15" height="1.1" fill="#6a9955"/><rect x="19.09" y="102.50" width="6.64" height="1.1" fill="#9cdcfe"/><rect x="26.56" y="102.50" width="1.66" height="1.1" fill="#9cdcfe"/><rect x="29.05" y="102.50" width="1.66" height="1.1" fill="#9cdcfe"/><rect x="31.54" y="102.50" width="0.83" height="1.1" fill="#9cdcfe"/><rect x="34.03" y="102.50" width="2.49" height="1.1" fill="#dcdcaa"/><rect x="37.35" y="102.50" width="3.32" height="1.1" fill="#dcdcaa"/><rect x="41.50" y="102.50" width="0.83" height="1.1" fill="#dcdcaa"/><rect x="1.66" y="106.50" width="4.15" height="1.1" fill="#9cdcfe"/><rect x="6.64" y="106.50" width="1.66" height="1.1" fill="#9cdcfe"/><rect x="9.13" y="106.50" width="4.15" height="1.1" fill="#9cdcfe"/><rect x="14.94" y="106.50" width="1.66" height="1.1" fill="#ce9178"/><rect x="17.43" y="106.50" width="2.49" height="1.1" fill="#ce9178"/><rect x="20.75" y="106.50" width="4.15" height="1.1" fill="#ce9178"/><rect x="3.32" y="108.50" width="3.32" height="1.1" fill="#dcdcaa"/><rect x="7.47" y="108.50" width="4.98" height="1.1" fill="#dcdcaa"/><rect x="14.11" y="108.50" width="7.47" height="1.1" fill="#ce9178"/><rect x="22.41" y="108.50" width="1.66" height="1.1" fill="#ce9178"/><rect x="24.90" y="108.50" width="5.81" height="1.1" fill="#ce9178"/><rect x="32.37" y="108.50" width="4.15" height="1.1" fill="#9cdcfe"/><rect x="3.32" y="110.50" width="4.15" height="1.1" fill="#9cdcfe"/><rect x="8.30" y="110.50" width="2.49" height="1.1" fill="#9cdcfe"/><rect x="1.66" y="112.50" width="2.49" height="1.1" fill="#d4d4d4"/><rect x="4.98" y="112.50" width="1.66" height="1.1" fill="#d4d4d4"/><rect x="0.00" y="114.50" width="4.15" height="1.1" fill="#c586c0"/><rect x="4.98" y="114.50" width="3.32" height="1.1" fill="#c586c0"/><rect x="9.96" y="114.50" width="3.32" height="1.1" fill="#9cdcfe"/><rect x="14.11" y="114.50" width="1.66" height="1.1" fill="#9cdcfe"/><rect x="1.66" y="116.50" width="7.47" height="1.1" fill="#9cdcfe"/><rect x="9.96" y="116.50" width="6.64" height="1.1" fill="#9cdcfe"/><rect x="17.43" y="116.50" width="0.83" height="1.1" fill="#9cdcfe"/><rect x="19.92" y="116.50" width="4.98" height="1.1" fill="#dcdcaa"/><rect x="3.32" y="118.50" width="4.15" height="1.1" fill="#9cdcfe"/><rect x="8.30" y="118.50" width="4.98" height="1.1" fill="#9cdcfe"/><rect x="14.11" y="118.50" width="0.83" height="1.1" fill="#9cdcfe"/><rect x="16.60" y="118.50" width="1.66" height="1.1" fill="#ce9178"/><rect x="19.09" y="118.50" width="4.15" height="1.1" fill="#ce9178"/><rect x="3.32" y="120.50" width="5.81" height="1.1" fill="#dcdcaa"/><rect x="1.66" y="122.50" width="1.66" height="1.1" fill="#d4d4d4"/><rect x="1.66" y="126.50" width="1.66" height="1.1" fill="#9cdcfe"/><rect x="4.15" y="126.50" width="3.32" height="1.1" fill="#9cdcfe"/><rect x="9.13" y="126.50" width="1.66" height="1.1" fill="#dcdcaa"/><rect x="11.62" y="126.50" width="2.49" height="1.1" fill="#dcdcaa"/><rect x="14.94" y="126.50" width="1.66" height="1.1" fill="#dcdcaa"/><rect x="18.26" y="126.50" width="2.49" height="1.1" fill="#ce9178"/><rect x="21.58" y="126.50" width="3.32" height="1.1" fill="#ce9178"/><rect x="1.66" y="128.50" width="1.66" height="1.1" fill="#d4d4d4"/><rect x="0.00" y="132.50" width="2.49" height="1.1" fill="#c586c0"/><rect x="3.32" y="132.50" width="7.47" height="1.1" fill="#c586c0"/><rect x="12.45" y="132.50" width="5.81" height="1.1" fill="#9cdcfe"/><rect x="19.09" y="132.50" width="1.66" height="1.1" fill="#9cdcfe"/><rect x="1.66" y="134.50" width="5.81" height="1.1" fill="#dcdcaa"/><rect x="8.30" y="134.50" width="1.66" height="1.1" fill="#dcdcaa"/><rect x="11.62" y="134.50" width="3.32" height="1.1" fill="#ce9178"/><rect x="1.66" y="136.50" width="6.64" height="1.1" fill="#9cdcfe"/><rect x="9.13" y="136.50" width="2.49" height="1.1" fill="#9cdcfe"/><rect x="0.00" y="138.50" width="2.49" height="1.1" fill="#d4d4d4"/></svg>
<div class="a" style="left:942px;top:174.5px;width:62px;height:1.5px;background:#264f78"></div>
<div class="a" style="left:942px;top:209.5px;width:62px;height:1.5px;background:#be1100"></div>
<div class="a" style="left:942px;top:259.5px;width:62px;height:1.5px;background:#be1100"></div>
<div class="a" style="left:1004px;top:130px;width:1px;height:344px;background:#2b2b2b"></div>
<div class="a" style="left:1005px;top:220px;width:11px;height:2px;background:#a0a0a0"></div>
<div class="a" style="left:1012px;top:292px;width:3px;height:4px;background:#e51400"></div>
<div class="a" style="left:1012px;top:395px;width:3px;height:3px;background:#e51400"></div>
<div class="a" style="left:1003px;top:369px;width:14px;height:27px;border-radius:4px 0 0 4px;background:#333333"></div>
<svg class="a" style="left:1006px;top:377px" width="7" height="11" viewBox="0 0 7 11"><path d="M1 1 L5.5 5.5 L1 10" stroke="#c5c5c5" stroke-width="1.1" fill="none"/></svg>
<div class="a" style="left:287px;top:474px;width:729px;height:189px;background:#1e1e1e;border-top:1px solid #414141"></div>
<div class="a" style="left:305px;top:482px;font-size:10px;line-height:13px;color:#9d9d9d">问题</div>
<div class="a" style="left:333px;top:482px;width:15px;height:15px;border-radius:8px;background:#4d4d4d;color:#fff;font-size:9.5px;line-height:15px;text-align:center">2</div>
<div class="a" style="left:366px;top:482px;font-size:10px;line-height:13px;color:#9d9d9d">输出</div>
<div class="a" style="left:406px;top:482px;font-size:10px;line-height:13px;color:#9d9d9d">调试控制台</div>
<div class="a" style="left:474px;top:482px;font-size:10px;line-height:13px;color:#9d9d9d;color:#e7e7e7">终端</div>
<div class="a" style="left:474px;top:502px;width:23px;height:1px;background:#e7e7e7"></div>
<svg class="a" style="left:826px;top:483px" width="12" height="13" viewBox="0 0 12 13"><rect x="0.6" y="0.6" width="10.8" height="11.8" rx="1.5" stroke="#cccccc" stroke-width="1.1" fill="none"/><path d="M4 4 L7 6.5 L4 9" stroke="#cccccc" stroke-width="1.1" fill="none"/></svg>
<div class="a" style="left:842.5px;top:483.5px;font-size:10.2px;line-height:13px;color:#cccccc">node - web</div>
<svg class="a" style="left:901px;top:483.5px" width="12" height="12" viewBox="0 0 12 12"><path d="M6 0.5 V11.5 M0.5 6 H11.5" stroke="#cccccc" stroke-width="1.1"/></svg>
<svg class="a" style="left:916px;top:487.5px" width="9" height="6" viewBox="0 0 9 6"><path d="M1 1 L4.5 4.5 L8 1" stroke="#cccccc" stroke-width="1" fill="none"/></svg>
<svg class="a" style="left:934px;top:483.5px" width="12" height="12" viewBox="0 0 13 13"><rect x="0.6" y="0.6" width="11.8" height="11.8" rx="1" stroke="#cccccc" stroke-width="1.1" fill="none"/><path d="M6.5 0.6 V12.4" stroke="#cccccc" stroke-width="1.1"/></svg>
<svg class="a" style="left:955px;top:483.5px" width="12" height="13" viewBox="0 0 12 13"><path d="M0.5 2.5 H11.5 M4 2.5 V0.8 H8 V2.5 M2 2.5 L2.8 12.3 H9.2 L10 2.5 M4.5 4.5 V10.5 M7.5 4.5 V10.5" stroke="#cccccc" stroke-width="1.1" fill="none"/></svg>
<svg class="a" style="left:977px;top:485.5px" width="11" height="7" viewBox="0 0 11 7"><path d="M1 6 L5.5 1.5 L10 6" stroke="#cccccc" stroke-width="1.1" fill="none"/></svg>
<svg class="a" style="left:995.5px;top:484.5px" width="10" height="10" viewBox="0 0 10 10"><path d="M1 1 L9 9 M9 1 L1 9" stroke="#cccccc" stroke-width="1.2"/></svg>
<div class="a tt" style="left:315px;top:518.5px;font-family:'Liberation Mono',monospace;font-size:10px;line-height:13px;white-space:pre;"><span style="color:#cccccc">- Local:   </span><span style="color:#11a8cd">http://localhost:8000</span> <span style="color:#cd3131">(copy to clipboard failed)</span></div>
<div class="a tt" style="left:315px;top:532.0px;font-family:'Liberation Mono',monospace;font-size:10px;line-height:13px;white-space:pre;"><span style="color:#cccccc">- Network: </span><span style="color:#11a8cd">http://100.89.21.186:8000</span></div>
<div class="a" style="left:304px;top:543px;width:35.5px;height:13px;background:#2472c8"></div>
<div class="a tt" style="left:309px;top:545.0px;font-family:'Liberation Mono',monospace;font-size:10px;line-height:13px;white-space:pre;"><span style="color:#1e1e1e">WAIT</span></div>
<div class="a tt" style="left:345px;top:545.0px;font-family:'Liberation Mono',monospace;font-size:10px;line-height:13px;white-space:pre;"><span style="color:#3b8eea">Compiling...</span></div>
<div class="a tt" style="left:953px;top:545.0px;font-family:'Liberation Mono',monospace;font-size:10px;line-height:13px;white-space:pre;"><span style="color:#858585">17:58:20</span></div>
<svg class="a" style="left:304px;top:584px" width="9" height="11" viewBox="0 0 9 11"><path d="M0.8 6 L3 9.5 L8.3 0.8" stroke="#23d18b" stroke-width="1.6" fill="none"/></svg>
<div class="a tt" style="left:315px;top:584.5px;font-family:'Liberation Mono',monospace;font-size:10px;line-height:13px;white-space:pre;"><span style="color:#0dbc79">Webpack</span></div>
<div class="a tt" style="left:315px;top:598.0px;font-family:'Liberation Mono',monospace;font-size:10px;line-height:13px;white-space:pre;"><span style="color:#767676">Compiled successfully in 3.56s</span></div>
<div class="a" style="left:304px;top:622px;width:35.5px;height:13px;background:#0dbc79"></div>
<div class="a tt" style="left:309px;top:624.5px;font-family:'Liberation Mono',monospace;font-size:10px;line-height:13px;white-space:pre;"><span style="color:#1e1e1e">DONE</span></div>
<div class="a tt" style="left:345px;top:624.5px;font-family:'Liberation Mono',monospace;font-size:10px;line-height:13px;white-space:pre;"><span style="color:#0dbc79">Compiled successfully in 3555ms</span></div>
<div class="a tt" style="left:953px;top:624.5px;font-family:'Liberation Mono',monospace;font-size:10px;line-height:13px;white-space:pre;"><span style="color:#858585">17:58:24</span></div>
<div class="a" style="left:304px;top:650px;width:7px;height:11px;border:1px solid #cccccc"></div>
<div class="a" style="left:1006px;top:644px;width:10px;height:19px;background:#424242"></div>
<div class="a" style="left:0;top:663px;width:1017px;height:17px;background:#007acc"></div>
<div class="a" style="left:0;top:663px;width:108px;height:17px;background:#16825d"></div>
<svg class="a" style="left:0;top:663px" width="30" height="17" viewBox="0 663 30 17"><path d="M10 669.3 L14.2 672.4 L10 675.5 M18.1 666 L13.9 669.1 L18.1 672.2" stroke="#fff" stroke-width="1.1" fill="none"/></svg>
<div class="sb" style="left:23px">hongxi.titanide.cn</div>
<svg class="a" style="left:115px;top:665px" width="10" height="13" viewBox="0 0 10 13"><circle cx="2.5" cy="2.2" r="1.6" stroke="#fff" fill="none"/><circle cx="2.5" cy="10.8" r="1.6" stroke="#fff" fill="none"/><circle cx="7.8" cy="4" r="1.6" stroke="#fff" fill="none"/><path d="M2.5 3.8 V9.2 M7.8 5.6 Q7.8 8 3.5 9.5" stroke="#fff" fill="none"/></svg>
<div class="sb" style="left:129px">master*</div>
<svg class="a" style="left:175px;top:666px" width="13" height="12" viewBox="0 0 13 12"><path d="M1.5 6 A5 5 0 0 1 10.5 3.5 M11.5 6 A5 5 0 0 1 2.5 8.5" stroke="#fff" stroke-width="1.2" fill="none"/><path d="M8.5 3.5 H11 V1 M4.5 8.5 H2 V11" stroke="#fff" stroke-width="1.2" fill="none"/></svg>
<svg class="a" style="left:201px;top:666px" width="12" height="12" viewBox="0 0 12 12"><circle cx="6" cy="6" r="5.2" stroke="#fff" stroke-width="1.1" fill="none"/><path d="M3.8 3.8 L8.2 8.2 M8.2 3.8 L3.8 8.2" stroke="#fff" stroke-width="1.1"/></svg>
<div class="sb" style="left:215px">2</div>
<svg class="a" style="left:224px;top:665px" width="12" height="12" viewBox="0 0 12 12"><path d="M6 1 L11.3 11 H0.7 Z" stroke="#fff" stroke-width="1.1" fill="none" stroke-linejoin="round"/><path d="M6 4.5 V7.8 M6 8.8 V9.8" stroke="#fff" stroke-width="1.1"/></svg>
<div class="sb" style="left:238px">0</div>
<svg class="a" style="left:501px;top:665px" width="8" height="13" viewBox="0 0 8 13"><circle cx="4" cy="6.5" r="2.5" stroke="#fff" stroke-width="1.1" fill="none"/><path d="M4 0 V4 M4 9 V13" stroke="#fff" stroke-width="1.1"/></svg>
<div class="sb" style="left:514px">琚致远, 3 years ago</div>
<div class="sb" style="left:610px">行 34，列 47</div>
<div class="sb" style="left:681px">空格: 2</div>
<div class="sb" style="left:724px">UTF-8</div>
<div class="sb" style="left:763px">LF</div>
<div class="sb" style="left:788px">{ }&nbsp; TypeScript React</div>
<div class="sb" style="left:887px">Layout: US</div>
<div class="sb" style="left:947px">Prettier</div>
<svg class="a" style="left:992px;top:665px" width="12" height="13" viewBox="0 0 12 13"><path d="M2 9.5 V6 A4 4 0 0 1 10 6 V9.5 L11 10.5 H1 Z M4.5 11.5 A1.5 1.5 0 0 0 7.5 11.5" stroke="#fff" stroke-width="1.1" fill="none" stroke-linejoin="round"/></svg>
<div class="a" style="left:0;top:680px;width:1268px;height:6px;background:linear-gradient(90deg,#434343 0,#434343 1000px,#343434 1120px,#222222 1200px,#262626 1262px)"></div><div class="a" style="left:1263px;top:680px;width:1px;height:6px;background:#888"></div>
<div class="a" style="left:131px;top:680px;width:88px;height:6px;background:#5e5e5e"></div>
<div class="a" style="left:1016px;top:59px;width:252px;height:621px;background:#2a2a2a"></div>
<div class="a" style="left:1016px;top:84px;width:1px;height:596px;background:#2b2b2b"></div>
<div class="a" style="left:1017px;top:59px;width:251px;height:25px;background:#383a3d"></div>
<svg class="a" style="left:1033px;top:68.5px" width="10" height="6" viewBox="0 0 10 6"><path d="M1 1 L5 5 L9 1" stroke="#c5c5c5" stroke-width="1.1" fill="none"/></svg>
<div class="a" style="left:1052px;top:64.5px;font-size:10.5px;line-height:14px;color:#cccccc">文件</div>
<div class="a" style="left:1231.6px;top:60.7px;width:20px;height:20px;border-radius:10px;background:#ff0000;color:#fff;font-size:10.5px;line-height:21px;text-align:center">a</div>
<svg class="a" style="left:1034px;top:100px" width="11" height="10" viewBox="0 0 11 10"><path d="M5.5 0.5 L10.5 5 H9 V9.5 H6.5 V6.5 H4.5 V9.5 H2 V5 H0.5 Z" fill="#c5c5c5"/></svg>
<div class="a" style="left:1033px;top:119px;width:219px;height:1px;background:#5a5a5a"></div>
<div class="a" style="left:1033px;top:137px;width:98px;height:26px;border:1px solid #474747;border-radius:2px;background:#262626"></div>
<div class="a" style="left:1047px;top:143px;font-size:11.5px;line-height:14px;color:#cccccc">返回上一级</div>
<svg class="a" style="left:1107px;top:144px" width="11" height="11" viewBox="0 0 11 11"><path d="M5.5 1 L1 5.5 L5.5 10 V7.2 H10.3 V3.8 H5.5 Z" fill="#cccccc"/></svg>
<div class="a" style="left:1134px;top:137px;width:86px;height:26px;border:1px solid #474747;border-radius:2px;background:#262626"></div>
<div class="a" style="left:1147px;top:143px;font-size:11.5px;line-height:14px;color:#cccccc">上传文件</div>
<svg class="a" style="left:1196px;top:144px" width="12" height="11" viewBox="0 0 12 11"><path d="M6 0.5 L10 5 H7.5 V8 H4.5 V5 H2 Z" fill="#cccccc"/><rect x="0.5" y="8.5" width="11" height="2.2" fill="#cccccc"/></svg>
<div class="a" style="left:1048px;top:188px;font-size:11.5px;line-height:14px;color:#cccccc;font-weight:bold">文件名</div>
<div class="a" style="left:1191px;top:188px;font-size:11.5px;line-height:14px;color:#cccccc;font-weight:bold">文件大小</div>
<div class="a" style="left:1042px;top:209px;width:202px;height:1px;background:#5a5a5a"></div>
<svg class="a" style="left:1047px;top:220px" width="13" height="10" viewBox="0 0 13 10"><path d="M0.5 1 H4.5 L5.5 2 H10.5 V3.5 H2.5 L0.5 9 Z" fill="#bbbbbb"/><path d="M2.8 4 H12.8 L10.8 9.5 H0.8 Z" fill="#bbbbbb"/></svg>
<div class="a" style="left:1070px;top:218px;font-size:11.5px;line-height:14px;color:#cccccc">apisix-dashboard-...</div>
<div class="a" style="left:1191px;top:218px;font-size:11.5px;line-height:14px;color:#cccccc">~ 0 B</div>
<div class="a" style="left:1042px;top:240px;width:202px;height:1px;background:#5a5a5a"></div>
<svg class="a" style="left:1047px;top:251px" width="13" height="10" viewBox="0 0 13 10"><path d="M0.5 1 H4.5 L5.5 2 H10.5 V3.5 H2.5 L0.5 9 Z" fill="#bbbbbb"/><path d="M2.8 4 H12.8 L10.8 9.5 H0.8 Z" fill="#bbbbbb"/></svg>
<div class="a" style="left:1070px;top:249px;font-size:11.5px;line-height:14px;color:#cccccc">space.share</div>
<div class="a" style="left:1191px;top:249px;font-size:11.5px;line-height:14px;color:#cccccc">~ 0 B</div>
<div class="a" style="left:1017px;top:400px;width:251px;height:23px;background:#383b3e"></div>
<svg class="a" style="left:1033px;top:408.5px" width="10" height="6" viewBox="0 0 10 6"><path d="M1 1 L5 5 L9 1" stroke="#c5c5c5" stroke-width="1.1" fill="none"/></svg>
<div class="a" style="left:1052px;top:404.5px;font-size:10.5px;line-height:14px;color:#cccccc">端口</div>
<svg class="a" style="left:1034px;top:441px" width="16" height="10" viewBox="0 0 16 10"><ellipse cx="5.5" cy="6" rx="4.8" ry="3.2" transform="rotate(-20 5.5 6)" stroke="#aaaaaa" stroke-width="1" fill="none"/><ellipse cx="10.5" cy="4" rx="4.8" ry="3.2" transform="rotate(-20 10.5 4)" stroke="#aaaaaa" stroke-width="1" fill="none"/></svg>
<div class="a" style="left:1056px;top:439px;font-size:11.5px;line-height:14px;color:#cccccc">8000</div>
<svg class="a" style="left:1179px;top:440px" width="12" height="12" viewBox="0 0 12 12"><path d="M9.5 6.5 V11 H1 V2.5 H5.5 M7 1 H11 V5 M11 1 L5.5 6.5" stroke="#c5c5c5" stroke-width="1.1" fill="none"/></svg>
<svg class="a" style="left:1198px;top:440px" width="12" height="12" viewBox="0 0 12 12"><rect x="0.6" y="3.6" width="7.8" height="7.8" stroke="#c5c5c5" stroke-width="1.1" fill="none"/><path d="M3.5 3.5 V0.6 H11.4 V8.5 H8.5" stroke="#c5c5c5" stroke-width="1.1" fill="none"/></svg>
<svg class="a" style="left:1216px;top:440px" width="12" height="12" viewBox="0 0 20 20"><circle cx="10" cy="10" r="3" stroke="#c5c5c5" stroke-width="1.6" fill="none"/><path d="M10 1.5 L11.5 1.5 L12 4.2 L13.6 4.9 L15.5 3.6 L16.6 4.7 L15.3 6.6 L16 8.2 L18.5 8.7 V11.3 L16 11.8 L15.3 13.4 L16.6 15.3 L15.5 16.4 L13.6 15.1 L12 15.8 L11.5 18.5 H8.5 L8 15.8 L6.4 15.1 L4.5 16.4 L3.4 15.3 L4.7 13.4 L4 11.8 L1.5 11.3 V8.7 L4 8.2 L4.7 6.6 L3.4 4.7 L4.5 3.6 L6.4 4.9 L8 4.2 L8.5 1.5 Z" stroke="#c5c5c5" stroke-width="1.6" fill="none" stroke-linejoin="round"/></svg>
<svg class="a" style="left:1234px;top:440px" width="12" height="12" viewBox="0 0 12 12"><circle cx="6" cy="6" r="5.3" stroke="#c5c5c5" stroke-width="1.1" fill="none"/><path d="M3.8 3.8 L8.2 8.2 M8.2 3.8 L3.8 8.2" stroke="#c5c5c5" stroke-width="1.1"/></svg>
<div class="a" style="left:1034px;top:460px;width:218px;height:1px;background:#5a5a5a"></div>
<svg class="a" style="left:1034px;top:470px" width="16" height="10" viewBox="0 0 16 10"><ellipse cx="5.5" cy="6" rx="4.8" ry="3.2" transform="rotate(-20 5.5 6)" stroke="#aaaaaa" stroke-width="1" fill="none"/><ellipse cx="10.5" cy="4" rx="4.8" ry="3.2" transform="rotate(-20 10.5 4)" stroke="#aaaaaa" stroke-width="1" fill="none"/></svg>
<div class="a" style="left:1056px;top:468px;font-size:11.5px;line-height:14px;color:#cccccc">3000</div>
<svg class="a" style="left:1179px;top:469px" width="12" height="12" viewBox="0 0 12 12"><path d="M9.5 6.5 V11 H1 V2.5 H5.5 M7 1 H11 V5 M11 1 L5.5 6.5" stroke="#c5c5c5" stroke-width="1.1" fill="none"/></svg>
<svg class="a" style="left:1198px;top:469px" width="12" height="12" viewBox="0 0 12 12"><rect x="0.6" y="3.6" width="7.8" height="7.8" stroke="#c5c5c5" stroke-width="1.1" fill="none"/><path d="M3.5 3.5 V0.6 H11.4 V8.5 H8.5" stroke="#c5c5c5" stroke-width="1.1" fill="none"/></svg>
<svg class="a" style="left:1216px;top:469px" width="12" height="12" viewBox="0 0 20 20"><circle cx="10" cy="10" r="3" stroke="#c5c5c5" stroke-width="1.6" fill="none"/><path d="M10 1.5 L11.5 1.5 L12 4.2 L13.6 4.9 L15.5 3.6 L16.6 4.7 L15.3 6.6 L16 8.2 L18.5 8.7 V11.3 L16 11.8 L15.3 13.4 L16.6 15.3 L15.5 16.4 L13.6 15.1 L12 15.8 L11.5 18.5 H8.5 L8 15.8 L6.4 15.1 L4.5 16.4 L3.4 15.3 L4.7 13.4 L4 11.8 L1.5 11.3 V8.7 L4 8.2 L4.7 6.6 L3.4 4.7 L4.5 3.6 L6.4 4.9 L8 4.2 L8.5 1.5 Z" stroke="#c5c5c5" stroke-width="1.6" fill="none" stroke-linejoin="round"/></svg>
<svg class="a" style="left:1234px;top:469px" width="12" height="12" viewBox="0 0 12 12"><circle cx="6" cy="6" r="5.3" stroke="#c5c5c5" stroke-width="1.1" fill="none"/><path d="M3.8 3.8 L8.2 8.2 M8.2 3.8 L3.8 8.2" stroke="#c5c5c5" stroke-width="1.1"/></svg>
<div class="a" style="left:1017px;top:500px;width:251px;height:22px;background:#383b3e"></div>
<svg class="a" style="left:1033px;top:508.0px" width="10" height="6" viewBox="0 0 10 6"><path d="M1 1 L5 5 L9 1" stroke="#c5c5c5" stroke-width="1.1" fill="none"/></svg>
<div class="a" style="left:1052px;top:504.0px;font-size:10.5px;line-height:14px;color:#cccccc">Git</div>
<svg class="a" style="left:1076px;top:505px" width="12" height="12" viewBox="0 0 12 12"><path d="M1 0.5 H11 V8 H7.5 V11.5 H4.5 V8 H1 Z" fill="#cccccc"/><rect x="3" y="2" width="1.5" height="4" fill="#333"/><rect x="5.5" y="2" width="1.5" height="4" fill="#333"/><rect x="8" y="2" width="1.5" height="4" fill="#333"/></svg>
<div class="a" style="left:1092px;top:504px;font-size:10.5px;line-height:14px;color:#cccccc">克隆</div>
<div class="a" style="left:1034px;top:536.5px;font-size:11.8px;line-height:14px;color:#cccccc">origin https://github.com/apache/apisix-...</div>
<div class="a" style="left:1034px;top:556px;width:218px;height:1px;background:#5a5a5a"></div>
<div class="a" style="left:1034px;top:564.5px;font-size:11.8px;line-height:14px;color:#cccccc">origin https://github.com/apache/apisix-...</div>
<div class="a" style="left:1017px;top:593px;width:251px;height:23px;background:#383b3e"></div>
<svg class="a" style="left:1035px;top:599.5px" width="6" height="10" viewBox="0 0 6 10"><path d="M1 1 L5 5 L1 9" stroke="#c5c5c5" stroke-width="1.1" fill="none"/></svg>
<div class="a" style="left:1052px;top:597.5px;font-size:10.5px;line-height:14px;color:#cccccc">服务</div>
<div class="a" style="left:49px;top:123px;font-family:'Liberation Mono',monospace;font-size:11.2px;line-height:11px;color:rgba(255,255,255,0.055);transform:rotate(-21deg);transform-origin:0 9px;pointer-events:none">admin@titanide.cn</div>
<div class="a" style="left:380px;top:123px;font-family:'Liberation Mono',monospace;font-size:11.2px;line-height:11px;color:rgba(255,255,255,0.055);transform:rotate(-21deg);transform-origin:0 9px;pointer-events:none">admin@titanide.cn</div>
<div class="a" style="left:711px;top:123px;font-family:'Liberation Mono',monospace;font-size:11.2px;line-height:11px;color:rgba(255,255,255,0.055);transform:rotate(-21deg);transform-origin:0 9px;pointer-events:none">admin@titanide.cn</div>
<div class="a" style="left:1042px;top:123px;font-family:'Liberation Mono',monospace;font-size:11.2px;line-height:11px;color:rgba(255,255,255,0.055);transform:rotate(-21deg);transform-origin:0 9px;pointer-events:none">admin@titanide.cn</div>
<div class="a" style="left:49px;top:289px;font-family:'Liberation Mono',monospace;font-size:11.2px;line-height:11px;color:rgba(255,255,255,0.055);transform:rotate(-21deg);transform-origin:0 9px;pointer-events:none">admin@titanide.cn</div>
<div class="a" style="left:380px;top:289px;font-family:'Liberation Mono',monospace;font-size:11.2px;line-height:11px;color:rgba(255,255,255,0.055);transform:rotate(-21deg);transform-origin:0 9px;pointer-events:none">admin@titanide.cn</div>
<div class="a" style="left:711px;top:289px;font-family:'Liberation Mono',monospace;font-size:11.2px;line-height:11px;color:rgba(255,255,255,0.055);transform:rotate(-21deg);transform-origin:0 9px;pointer-events:none">admin@titanide.cn</div>
<div class="a" style="left:1042px;top:289px;font-family:'Liberation Mono',monospace;font-size:11.2px;line-height:11px;color:rgba(255,255,255,0.055);transform:rotate(-21deg);transform-origin:0 9px;pointer-events:none">admin@titanide.cn</div>
<div class="a" style="left:49px;top:454px;font-family:'Liberation Mono',monospace;font-size:11.2px;line-height:11px;color:rgba(255,255,255,0.055);transform:rotate(-21deg);transform-origin:0 9px;pointer-events:none">admin@titanide.cn</div>
<div class="a" style="left:380px;top:454px;font-family:'Liberation Mono',monospace;font-size:11.2px;line-height:11px;color:rgba(255,255,255,0.055);transform:rotate(-21deg);transform-origin:0 9px;pointer-events:none">admin@titanide.cn</div>
<div class="a" style="left:711px;top:454px;font-family:'Liberation Mono',monospace;font-size:11.2px;line-height:11px;color:rgba(255,255,255,0.055);transform:rotate(-21deg);transform-origin:0 9px;pointer-events:none">admin@titanide.cn</div>
<div class="a" style="left:1042px;top:454px;font-family:'Liberation Mono',monospace;font-size:11.2px;line-height:11px;color:rgba(255,255,255,0.055);transform:rotate(-21deg);transform-origin:0 9px;pointer-events:none">admin@titanide.cn</div>
<div class="a" style="left:49px;top:619px;font-family:'Liberation Mono',monospace;font-size:11.2px;line-height:11px;color:rgba(255,255,255,0.055);transform:rotate(-21deg);transform-origin:0 9px;pointer-events:none">admin@titanide.cn</div>
<div class="a" style="left:380px;top:619px;font-family:'Liberation Mono',monospace;font-size:11.2px;line-height:11px;color:rgba(255,255,255,0.055);transform:rotate(-21deg);transform-origin:0 9px;pointer-events:none">admin@titanide.cn</div>
<div class="a" style="left:711px;top:619px;font-family:'Liberation Mono',monospace;font-size:11.2px;line-height:11px;color:rgba(255,255,255,0.055);transform:rotate(-21deg);transform-origin:0 9px;pointer-events:none">admin@titanide.cn</div>
<div class="a" style="left:1042px;top:619px;font-family:'Liberation Mono',monospace;font-size:11.2px;line-height:11px;color:rgba(255,255,255,0.055);transform:rotate(-21deg);transform-origin:0 9px;pointer-events:none">admin@titanide.cn</div>
<div class="a" style="left:294px;top:575px;width:386px;height:76px;border:3px solid #4444d0"></div>
<div class="a" style="left:1016px;top:399px;width:247px;height:103px;border:4px solid #4444d0;border-bottom-width:3.5px"></div>
<svg class="a" style="left:0;top:0" width="1268" height="686" viewBox="0 0 1268 686"><path d="M687 591.3 L1008.2 465.5" stroke="#4444d0" stroke-width="3"/></svg>
</body></html>
